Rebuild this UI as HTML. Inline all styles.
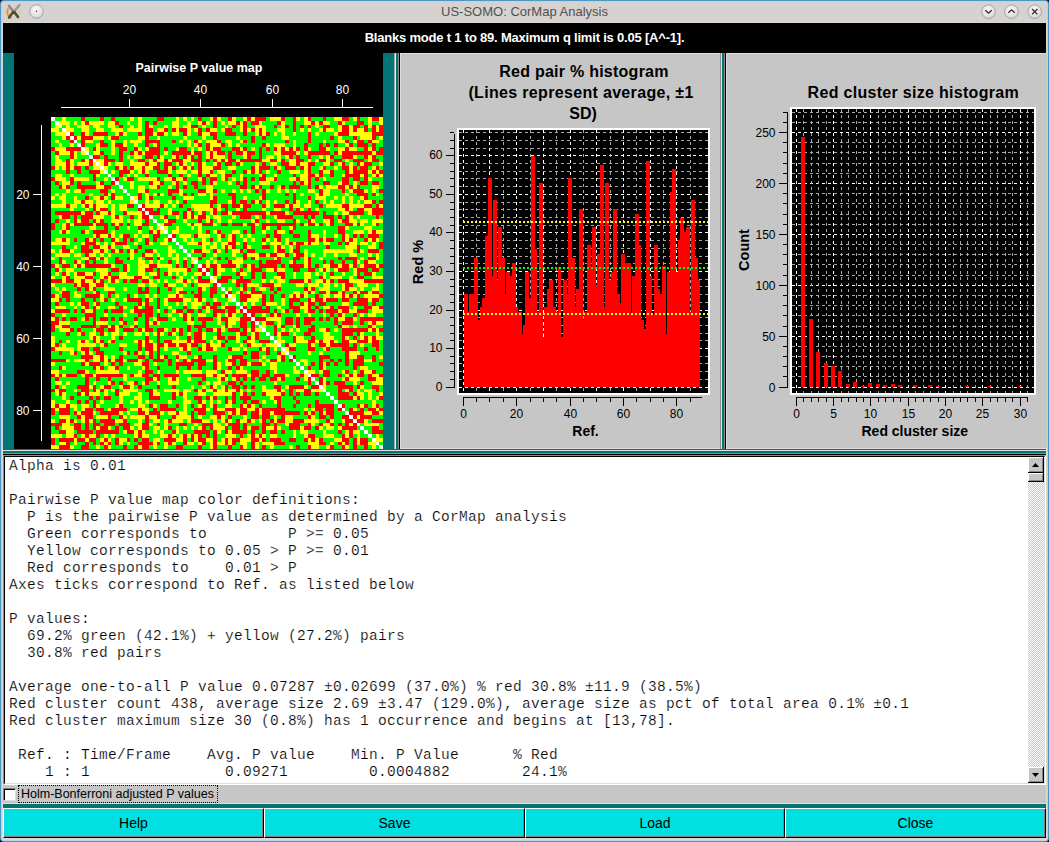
<!DOCTYPE html>
<html><head><meta charset="utf-8">
<style>
html,body{margin:0;padding:0;}
body{width:1049px;height:842px;overflow:hidden;background:#000;position:relative;font-family:"Liberation Sans",sans-serif;}
.a{position:absolute;}
svg text{font-family:"Liberation Sans",sans-serif;}
#txt{position:absolute;left:9px;top:458px;margin:0;font-family:"Liberation Mono",monospace;font-size:14.5px;letter-spacing:0.3px;line-height:17px;color:#000;-webkit-text-stroke:0.2px #fff;white-space:pre;}
.btn{position:absolute;top:808px;height:30px;background:#00e0e0;box-sizing:border-box;border-top:1px solid #fff;border-left:1px solid #fff;border-right:1px solid #000;border-bottom:1px solid #000;box-shadow:inset -1px -1px 0 #808080;font-size:14px;text-align:center;line-height:28px;color:#000;}
</style></head>
<body>
<!-- window frame -->
<div class="a" style="left:0;top:0;width:1049px;height:842px;background:#4a97c8;border-radius:4px;"></div>
<div class="a" style="left:1px;top:1px;width:1047px;height:840px;background:#b9d3e8;border-radius:3px;"></div>
<div class="a" style="left:2px;top:2px;width:1045px;height:838px;background:#dcd8d6;border-radius:2px;"></div>
<div class="a" style="left:2px;top:2px;width:1045px;height:20px;background:#d6d2d0;"></div>
<div class="a" style="left:0;top:22px;width:1049px;height:1px;"></div>
<!-- title bar -->
<div class="a" style="left:0;top:2px;width:1049px;height:20px;text-align:center;font-size:13px;line-height:20px;color:#505050;">US-SOMO: CorMap Analysis</div>
<svg class="a" style="left:0;top:0" width="60" height="22">
  <defs>
    <radialGradient id="bg1" cx="0.45" cy="0.35" r="0.7"><stop offset="0" stop-color="#fbfbfb"/><stop offset="0.7" stop-color="#e2e0de"/><stop offset="1" stop-color="#c8c6c4"/></radialGradient>
  </defs>
  <path d="M8.5 8.5 A6 6 0 0 0 12 18" stroke="#f08a18" stroke-width="1.6" fill="none"/>
  <path d="M19 8 A6 6 0 0 1 17 17" stroke="#f0c868" stroke-width="1" fill="none"/>
  <path d="M9 6 L18 17" stroke="#8a8a8a" stroke-width="2.6" stroke-linecap="round"/>
  <path d="M19.5 5 L9 17.5" stroke="#9a9a9a" stroke-width="2.4" stroke-linecap="round"/>
  <path d="M13 12 L9 17.5 M14.5 12 L18 17" stroke="#5a4a20" stroke-width="2.4" stroke-linecap="round"/>
  <circle cx="36.5" cy="11.5" r="6.8" fill="url(#bg1)" stroke="#9a9896" stroke-width="0.8"/>
  <circle cx="36.5" cy="11.2" r="0.8" fill="#333"/>
</svg>
<svg class="a" style="left:970px;top:0" width="79" height="22">
  <defs>
    <radialGradient id="bg2" cx="0.45" cy="0.35" r="0.7"><stop offset="0" stop-color="#fbfbfb"/><stop offset="0.7" stop-color="#e2e0de"/><stop offset="1" stop-color="#c8c6c4"/></radialGradient>
  </defs>
  <circle cx="18.5" cy="11.7" r="6.8" fill="url(#bg2)" stroke="#9a9896" stroke-width="0.8"/>
  <path d="M15.3 10.2 L18.5 13.2 L21.7 10.2" stroke="#2a2a2a" stroke-width="1.3" fill="none"/>
  <circle cx="41.5" cy="11.7" r="6.8" fill="url(#bg2)" stroke="#9a9896" stroke-width="0.8"/>
  <path d="M38.3 12.8 L41.5 9.8 L44.7 12.8" stroke="#2a2a2a" stroke-width="1.3" fill="none"/>
  <circle cx="64.7" cy="11.7" r="6.8" fill="url(#bg2)" stroke="#9a9896" stroke-width="0.8"/>
  <path d="M62 9 L67.4 14.4 M67.4 9 L62 14.4" stroke="#2a2a2a" stroke-width="1.3" fill="none"/>
</svg>

<!-- header -->
<div class="a" style="left:3px;top:23px;width:1043px;height:30px;background:#000;"></div>
<div class="a" style="left:3px;top:23px;width:1043px;height:30px;color:#fff;font-weight:bold;font-size:13px;letter-spacing:-0.2px;text-align:center;line-height:30px;">Blanks mode t 1 to 89. Maximum q limit is 0.05 [A^-1].</div>

<!-- panel 1 -->
<div class="a" style="left:3px;top:53px;width:391px;height:396px;background:#027474;"></div>
<div class="a" style="left:14px;top:53px;width:369px;height:396px;background:#000;"></div>
<!-- handle 1 -->
<div class="a" style="left:394px;top:53px;width:1px;height:396px;background:#a8a8a8;"></div>
<div class="a" style="left:395px;top:53px;width:1px;height:396px;background:#eeeeee;"></div>
<div class="a" style="left:396px;top:53px;width:2px;height:396px;background:#027474;"></div>
<div class="a" style="left:398px;top:53px;width:1px;height:396px;background:#8a8a8a;"></div>
<div class="a" style="left:399px;top:53px;width:1px;height:396px;background:#000;"></div>
<!-- panel 2 -->
<div class="a" style="left:400px;top:53px;width:320px;height:396px;background:#c6c6c6;box-sizing:border-box;border-left:1px solid #dedede;border-top:1px solid #dedede;border-bottom:1px solid #dedede;"></div>
<!-- handle 2 -->
<div class="a" style="left:720px;top:53px;width:1px;height:396px;background:#8a8a8a;"></div>
<div class="a" style="left:721px;top:53px;width:1px;height:396px;background:#e6e6e6;"></div>
<div class="a" style="left:722px;top:53px;width:2px;height:396px;background:#027474;"></div>
<div class="a" style="left:724px;top:53px;width:1px;height:396px;background:#8a8a8a;"></div>
<div class="a" style="left:725px;top:53px;width:1px;height:396px;background:#000;"></div>
<!-- panel 3 -->
<div class="a" style="left:726px;top:53px;width:321px;height:396px;background:#c6c6c6;box-sizing:border-box;border-left:1px solid #dedede;border-top:1px solid #dedede;border-bottom:1px solid #dedede;"></div>

<svg class="a" style="left:0;top:0;shape-rendering:crispEdges" width="1049" height="842">
<defs>
<clipPath id="c1"><rect x="459" y="130" width="249" height="263"/></clipPath>
<clipPath id="c3"><rect x="792" y="109" width="242" height="284"/></clipPath>
</defs>
<text x="199" y="72" font-size="12.5" text-anchor="middle" fill="#fff" font-weight="bold" >Pairwise P value map</text>
<rect x="61" y="107" width="312" height="1" fill="#fff"/>
<rect x="129" y="99" width="1" height="8" fill="#fff"/>
<text x="129.5" y="94" font-size="12" text-anchor="middle" fill="#fff" font-weight="normal" >20</text>
<rect x="200" y="99" width="1" height="8" fill="#fff"/>
<text x="200.5" y="94" font-size="12" text-anchor="middle" fill="#fff" font-weight="normal" >40</text>
<rect x="272" y="99" width="1" height="8" fill="#fff"/>
<text x="272.5" y="94" font-size="12" text-anchor="middle" fill="#fff" font-weight="normal" >60</text>
<rect x="342" y="99" width="1" height="8" fill="#fff"/>
<text x="342.5" y="94" font-size="12" text-anchor="middle" fill="#fff" font-weight="normal" >80</text>
<rect x="41" y="125" width="1" height="316" fill="#fff"/>
<rect x="33" y="194" width="8" height="1" fill="#fff"/>
<text x="29.5" y="198.5" font-size="12" text-anchor="end" fill="#fff" font-weight="normal" >20</text>
<rect x="33" y="266" width="8" height="1" fill="#fff"/>
<text x="29.5" y="270.5" font-size="12" text-anchor="end" fill="#fff" font-weight="normal" >40</text>
<rect x="33" y="338" width="8" height="1" fill="#fff"/>
<text x="29.5" y="342.5" font-size="12" text-anchor="end" fill="#fff" font-weight="normal" >60</text>
<rect x="33" y="410" width="8" height="1" fill="#fff"/>
<text x="29.5" y="414.5" font-size="12" text-anchor="end" fill="#fff" font-weight="normal" >80</text>
<path fill="#ff0000" d="M81 117h4v4h-4zM100 117h4v4h-4zM111 117h4v4h-4zM157 117h7v4h-7zM198 117h4v4h-4zM213 117h4v4h-4zM228 117h4v4h-4zM247 117h4v4h-4zM255 117h11v4h-11zM281 117h4v4h-4zM293 117h3v4h-3zM308 117h3v4h-3zM323 117h3v4h-3zM342 117h7v4h-7zM357 117h3v4h-3zM372 117h7v4h-7zM85 121h4v4h-4zM115 121h4v4h-4zM145 121h4v4h-4zM153 121h4v4h-4zM202 121h4v4h-4zM213 121h4v4h-4zM236 121h4v4h-4zM243 121h4v4h-4zM251 121h8v4h-8zM277 121h4v4h-4zM293 121h3v4h-3zM311 121h4v4h-4zM319 121h4v4h-4zM338 121h4v4h-4zM357 121h7v4h-7zM119 125h4v3h-4zM145 125h4v3h-4zM191 125h7v3h-7zM213 125h4v3h-4zM232 125h4v3h-4zM243 125h4v3h-4zM274 125h3v3h-3zM285 125h4v3h-4zM293 125h3v3h-3zM300 125h4v3h-4zM308 125h3v3h-3zM323 125h7v3h-7zM342 125h7v3h-7zM353 125h7v3h-7zM364 125h4v3h-4zM372 125h4v3h-4zM379 125h4v3h-4zM145 128h8v4h-8zM164 128h4v4h-4zM172 128h4v4h-4zM179 128h8v4h-8zM198 128h4v4h-4zM206 128h4v4h-4zM225 128h7v4h-7zM243 128h4v4h-4zM251 128h4v4h-4zM259 128h3v4h-3zM293 128h3v4h-3zM323 128h3v4h-3zM342 128h7v4h-7zM353 128h4v4h-4zM364 128h4v4h-4zM372 128h4v4h-4zM379 128h4v4h-4zM70 132h4v4h-4zM81 132h4v4h-4zM93 132h15v4h-15zM119 132h4v4h-4zM138 132h4v4h-4zM145 132h8v4h-8zM157 132h7v4h-7zM183 132h4v4h-4zM198 132h4v4h-4zM210 132h7v4h-7zM225 132h11v4h-11zM243 132h4v4h-4zM259 132h3v4h-3zM266 132h4v4h-4zM308 132h3v4h-3zM338 132h11v4h-11zM372 132h11v4h-11zM66 136h4v4h-4zM74 136h3v4h-3zM81 136h12v4h-12zM111 136h8v4h-8zM145 136h4v4h-4zM213 136h4v4h-4zM251 136h4v4h-4zM262 136h4v4h-4zM308 136h3v4h-3zM330 136h4v4h-4zM353 136h4v4h-4zM372 136h4v4h-4zM70 140h4v3h-4zM81 140h4v3h-4zM100 140h4v3h-4zM145 140h15v3h-15zM172 140h4v3h-4zM194 140h4v3h-4zM217 140h4v3h-4zM243 140h4v3h-4zM251 140h4v3h-4zM285 140h4v3h-4zM308 140h3v3h-3zM345 140h4v3h-4zM357 140h7v3h-7zM368 140h4v3h-4zM81 143h4v4h-4zM100 143h8v4h-8zM115 143h8v4h-8zM145 143h4v4h-4zM157 143h3v4h-3zM198 143h4v4h-4zM206 143h4v4h-4zM221 143h4v4h-4zM262 143h4v4h-4zM304 143h4v4h-4zM319 143h4v4h-4zM326 143h4v4h-4zM334 143h4v4h-4zM349 143h4v4h-4zM357 143h11v4h-11zM372 143h4v4h-4zM51 147h4v4h-4zM66 147h15v4h-15zM93 147h3v4h-3zM119 147h8v4h-8zM134 147h4v4h-4zM149 147h11v4h-11zM164 147h4v4h-4zM179 147h8v4h-8zM206 147h4v4h-4zM213 147h8v4h-8zM232 147h8v4h-8zM243 147h4v4h-4zM259 147h3v4h-3zM266 147h4v4h-4zM274 147h3v4h-3zM281 147h4v4h-4zM289 147h4v4h-4zM296 147h4v4h-4zM304 147h4v4h-4zM319 147h7v4h-7zM345 147h4v4h-4zM364 147h4v4h-4zM372 147h4v4h-4zM379 147h4v4h-4zM55 151h4v4h-4zM70 151h4v4h-4zM100 151h4v4h-4zM119 151h4v4h-4zM130 151h4v4h-4zM138 151h4v4h-4zM145 151h15v4h-15zM172 151h19v4h-19zM194 151h8v4h-8zM210 151h3v4h-3zM217 151h8v4h-8zM228 151h4v4h-4zM236 151h7v4h-7zM247 151h8v4h-8zM259 151h3v4h-3zM281 151h15v4h-15zM308 151h22v4h-22zM334 151h4v4h-4zM342 151h30v4h-30zM376 151h7v4h-7zM70 155h4v4h-4zM93 155h7v4h-7zM104 155h4v4h-4zM119 155h4v4h-4zM145 155h8v4h-8zM157 155h3v4h-3zM176 155h3v4h-3zM183 155h4v4h-4zM191 155h3v4h-3zM198 155h4v4h-4zM210 155h3v4h-3zM228 155h4v4h-4zM247 155h4v4h-4zM259 155h3v4h-3zM289 155h4v4h-4zM296 155h4v4h-4zM308 155h3v4h-3zM330 155h4v4h-4zM342 155h11v4h-11zM364 155h4v4h-4zM372 155h4v4h-4zM66 159h4v3h-4zM81 159h4v3h-4zM89 159h4v3h-4zM104 159h11v3h-11zM119 159h4v3h-4zM138 159h7v3h-7zM153 159h4v3h-4zM164 159h4v3h-4zM172 159h11v3h-11zM191 159h11v3h-11zM206 159h4v3h-4zM213 159h4v3h-4zM221 159h4v3h-4zM228 159h8v3h-8zM240 159h22v3h-22zM270 159h7v3h-7zM281 159h4v3h-4zM296 159h8v3h-8zM319 159h7v3h-7zM334 159h8v3h-8zM353 159h11v3h-11zM372 159h7v3h-7zM66 162h4v4h-4zM89 162h4v4h-4zM104 162h4v4h-4zM145 162h4v4h-4zM157 162h3v4h-3zM164 162h8v4h-8zM179 162h4v4h-4zM198 162h4v4h-4zM217 162h4v4h-4zM225 162h7v4h-7zM236 162h4v4h-4zM262 162h4v4h-4zM281 162h8v4h-8zM296 162h4v4h-4zM308 162h7v4h-7zM330 162h4v4h-4zM342 162h3v4h-3zM357 162h3v4h-3zM364 162h8v4h-8zM51 166h4v4h-4zM66 166h4v4h-4zM74 166h7v4h-7zM85 166h4v4h-4zM115 166h4v4h-4zM123 166h4v4h-4zM130 166h4v4h-4zM142 166h3v4h-3zM153 166h7v4h-7zM164 166h4v4h-4zM172 166h4v4h-4zM183 166h4v4h-4zM191 166h3v4h-3zM198 166h4v4h-4zM213 166h8v4h-8zM251 166h4v4h-4zM259 166h11v4h-11zM274 166h3v4h-3zM285 166h11v4h-11zM300 166h4v4h-4zM308 166h3v4h-3zM323 166h3v4h-3zM342 166h7v4h-7zM353 166h4v4h-4zM360 166h8v4h-8zM376 166h3v4h-3zM66 170h4v4h-4zM77 170h4v4h-4zM89 170h11v4h-11zM119 170h11v4h-11zM142 170h3v4h-3zM157 170h11v4h-11zM198 170h4v4h-4zM210 170h3v4h-3zM232 170h4v4h-4zM243 170h4v4h-4zM251 170h4v4h-4zM259 170h3v4h-3zM277 170h4v4h-4zM308 170h3v4h-3zM319 170h4v4h-4zM330 170h4v4h-4zM345 170h4v4h-4zM353 170h15v4h-15zM372 170h4v4h-4zM379 170h4v4h-4zM93 174h3v3h-3zM119 174h4v3h-4zM145 174h4v3h-4zM168 174h4v3h-4zM179 174h4v3h-4zM198 174h4v3h-4zM206 174h4v3h-4zM225 174h7v3h-7zM262 174h4v3h-4zM293 174h3v3h-3zM308 174h7v3h-7zM319 174h4v3h-4zM330 174h4v3h-4zM345 174h15v3h-15zM364 174h4v3h-4zM376 174h3v3h-3zM51 177h4v4h-4zM70 177h4v4h-4zM93 177h3v4h-3zM115 177h4v4h-4zM127 177h7v4h-7zM157 177h3v4h-3zM172 177h4v4h-4zM183 177h4v4h-4zM202 177h4v4h-4zM210 177h7v4h-7zM225 177h3v4h-3zM243 177h4v4h-4zM251 177h4v4h-4zM259 177h7v4h-7zM274 177h3v4h-3zM296 177h4v4h-4zM308 177h3v4h-3zM315 177h4v4h-4zM342 177h7v4h-7zM353 177h7v4h-7zM364 177h4v4h-4zM55 181h4v4h-4zM70 181h4v4h-4zM77 181h4v4h-4zM100 181h4v4h-4zM111 181h4v4h-4zM149 181h4v4h-4zM160 181h4v4h-4zM176 181h3v4h-3zM191 181h7v4h-7zM202 181h4v4h-4zM210 181h3v4h-3zM236 181h4v4h-4zM243 181h4v4h-4zM293 181h3v4h-3zM300 181h4v4h-4zM308 181h3v4h-3zM323 181h7v4h-7zM342 181h7v4h-7zM360 181h8v4h-8zM372 181h7v4h-7zM59 185h3v4h-3zM66 185h4v4h-4zM77 185h19v4h-19zM104 185h7v4h-7zM157 185h3v4h-3zM176 185h3v4h-3zM183 185h4v4h-4zM194 185h4v4h-4zM240 185h7v4h-7zM251 185h4v4h-4zM259 185h3v4h-3zM270 185h4v4h-4zM281 185h4v4h-4zM289 185h11v4h-11zM308 185h3v4h-3zM315 185h4v4h-4zM338 185h7v4h-7zM349 185h4v4h-4zM357 185h3v4h-3zM81 189h4v4h-4zM100 189h8v4h-8zM145 189h4v4h-4zM168 189h11v4h-11zM198 189h8v4h-8zM213 189h4v4h-4zM255 189h4v4h-4zM262 189h4v4h-4zM319 189h4v4h-4zM342 189h3v4h-3zM353 189h11v4h-11zM379 189h4v4h-4zM104 193h4v3h-4zM111 193h4v3h-4zM138 193h4v3h-4zM157 193h3v3h-3zM168 193h4v3h-4zM183 193h4v3h-4zM191 193h3v3h-3zM228 193h8v3h-8zM262 193h4v3h-4zM285 193h4v3h-4zM293 193h3v3h-3zM319 193h4v3h-4zM357 193h11v3h-11zM372 193h4v3h-4zM85 196h4v4h-4zM100 196h4v4h-4zM111 196h4v4h-4zM138 196h4v4h-4zM149 196h4v4h-4zM172 196h4v4h-4zM213 196h4v4h-4zM232 196h4v4h-4zM262 196h4v4h-4zM293 196h3v4h-3zM308 196h3v4h-3zM364 196h4v4h-4zM81 200h4v4h-4zM183 200h4v4h-4zM210 200h7v4h-7zM232 200h4v4h-4zM240 200h7v4h-7zM251 200h4v4h-4zM259 200h3v4h-3zM285 200h4v4h-4zM293 200h3v4h-3zM315 200h4v4h-4zM372 200h4v4h-4zM379 200h4v4h-4zM66 204h4v4h-4zM85 204h4v4h-4zM93 204h3v4h-3zM127 204h7v4h-7zM142 204h3v4h-3zM160 204h4v4h-4zM179 204h4v4h-4zM210 204h3v4h-3zM221 204h7v4h-7zM232 204h8v4h-8zM243 204h8v4h-8zM262 204h4v4h-4zM274 204h11v4h-11zM289 204h4v4h-4zM319 204h4v4h-4zM342 204h7v4h-7zM364 204h8v4h-8zM376 204h3v4h-3zM93 208h3v3h-3zM100 208h8v3h-8zM138 208h4v3h-4zM145 208h8v3h-8zM157 208h3v3h-3zM187 208h4v3h-4zM213 208h4v3h-4zM225 208h3v3h-3zM243 208h4v3h-4zM289 208h4v3h-4zM296 208h4v3h-4zM308 208h3v3h-3zM345 208h4v3h-4zM357 208h7v3h-7zM372 208h11v3h-11zM55 211h26v4h-26zM85 211h8v4h-8zM96 211h4v4h-4zM108 211h3v4h-3zM123 211h4v4h-4zM142 211h3v4h-3zM149 211h11v4h-11zM172 211h7v4h-7zM183 211h4v4h-4zM191 211h3v4h-3zM202 211h4v4h-4zM213 211h4v4h-4zM221 211h7v4h-7zM232 211h34v4h-34zM270 211h15v4h-15zM293 211h26v4h-26zM323 211h3v4h-3zM349 211h15v4h-15zM372 211h11v4h-11zM62 215h8v4h-8zM74 215h3v4h-3zM81 215h12v4h-12zM115 215h4v4h-4zM130 215h4v4h-4zM142 215h7v4h-7zM164 215h4v4h-4zM183 215h4v4h-4zM191 215h3v4h-3zM198 215h8v4h-8zM240 215h11v4h-11zM262 215h4v4h-4zM277 215h16v4h-16zM304 215h4v4h-4zM311 215h4v4h-4zM323 215h11v4h-11zM338 215h4v4h-4zM345 215h4v4h-4zM376 215h3v4h-3zM55 219h4v4h-4zM74 219h3v4h-3zM81 219h8v4h-8zM93 219h3v4h-3zM100 219h4v4h-4zM145 219h4v4h-4zM168 219h8v4h-8zM198 219h4v4h-4zM210 219h3v4h-3zM255 219h4v4h-4zM293 219h3v4h-3zM308 219h3v4h-3zM330 219h4v4h-4zM342 219h7v4h-7zM51 223h4v3h-4zM66 223h4v3h-4zM74 223h19v3h-19zM96 223h12v3h-12zM111 223h4v3h-4zM119 223h4v3h-4zM127 223h3v3h-3zM142 223h7v3h-7zM164 223h8v3h-8zM191 223h3v3h-3zM202 223h11v3h-11zM221 223h7v3h-7zM232 223h11v3h-11zM247 223h8v3h-8zM262 223h34v3h-34zM300 223h4v3h-4zM308 223h7v3h-7zM319 223h4v3h-4zM330 223h4v3h-4zM345 223h8v3h-8zM357 223h3v3h-3zM376 223h3v3h-3zM51 226h4v4h-4zM66 226h4v4h-4zM104 226h4v4h-4zM115 226h4v4h-4zM138 226h4v4h-4zM251 226h4v4h-4zM262 226h4v4h-4zM277 226h4v4h-4zM293 226h3v4h-3zM338 226h7v4h-7zM62 230h4v4h-4zM81 230h4v4h-4zM93 230h15v4h-15zM149 230h4v4h-4zM157 230h3v4h-3zM206 230h4v4h-4zM217 230h4v4h-4zM243 230h4v4h-4zM251 230h4v4h-4zM274 230h3v4h-3zM289 230h4v4h-4zM308 230h3v4h-3zM338 230h7v4h-7zM372 230h4v4h-4zM96 234h4v4h-4zM108 234h3v4h-3zM123 234h7v4h-7zM153 234h7v4h-7zM172 234h4v4h-4zM194 234h4v4h-4zM221 234h4v4h-4zM232 234h4v4h-4zM266 234h4v4h-4zM274 234h7v4h-7zM293 234h7v4h-7zM308 234h3v4h-3zM342 234h3v4h-3zM353 234h4v4h-4zM360 234h4v4h-4zM368 234h11v4h-11zM62 238h4v4h-4zM74 238h3v4h-3zM85 238h4v4h-4zM93 238h3v4h-3zM100 238h4v4h-4zM111 238h4v4h-4zM123 238h4v4h-4zM130 238h4v4h-4zM145 238h4v4h-4zM153 238h4v4h-4zM168 238h4v4h-4zM210 238h3v4h-3zM232 238h4v4h-4zM262 238h4v4h-4zM277 238h4v4h-4zM308 238h7v4h-7zM319 238h4v4h-4zM326 238h8v4h-8zM342 238h3v4h-3zM349 238h4v4h-4zM364 238h4v4h-4zM372 238h4v4h-4zM85 242h11v3h-11zM115 242h12v3h-12zM145 242h4v3h-4zM198 242h4v3h-4zM228 242h8v3h-8zM243 242h4v3h-4zM289 242h4v3h-4zM296 242h8v3h-8zM308 242h3v3h-3zM338 242h4v3h-4zM345 242h4v3h-4zM379 242h4v3h-4zM62 245h4v4h-4zM81 245h8v4h-8zM93 245h7v4h-7zM108 245h3v4h-3zM138 245h4v4h-4zM225 245h3v4h-3zM232 245h4v4h-4zM243 245h4v4h-4zM262 245h8v4h-8zM277 245h4v4h-4zM296 245h4v4h-4zM326 245h4v4h-4zM357 245h3v4h-3zM379 245h4v4h-4zM62 249h8v4h-8zM81 249h12v4h-12zM100 249h4v4h-4zM111 249h4v4h-4zM119 249h4v4h-4zM127 249h3v4h-3zM134 249h4v4h-4zM145 249h8v4h-8zM194 249h8v4h-8zM213 249h4v4h-4zM225 249h3v4h-3zM240 249h3v4h-3zM247 249h8v4h-8zM277 249h8v4h-8zM293 249h7v4h-7zM357 249h3v4h-3zM368 249h11v4h-11zM85 253h4v4h-4zM142 253h3v4h-3zM202 253h4v4h-4zM243 253h4v4h-4zM259 253h7v4h-7zM270 253h7v4h-7zM285 253h4v4h-4zM296 253h8v4h-8zM59 257h3v3h-3zM89 257h7v3h-7zM100 257h4v3h-4zM115 257h4v3h-4zM127 257h3v3h-3zM145 257h8v3h-8zM157 257h3v3h-3zM198 257h4v3h-4zM217 257h4v3h-4zM225 257h3v3h-3zM243 257h4v3h-4zM251 257h4v3h-4zM277 257h4v3h-4zM293 257h7v3h-7zM308 257h3v3h-3zM338 257h4v3h-4zM345 257h12v3h-12zM368 257h8v3h-8zM59 260h3v4h-3zM74 260h3v4h-3zM85 260h4v4h-4zM93 260h3v4h-3zM115 260h8v4h-8zM168 260h4v4h-4zM183 260h4v4h-4zM228 260h4v4h-4zM259 260h3v4h-3zM266 260h15v4h-15zM293 260h3v4h-3zM308 260h3v4h-3zM323 260h3v4h-3zM330 260h4v4h-4zM342 260h3v4h-3zM353 260h4v4h-4zM364 260h4v4h-4zM51 264h4v4h-4zM62 264h8v4h-8zM77 264h4v4h-4zM85 264h26v4h-26zM123 264h4v4h-4zM149 264h8v4h-8zM176 264h3v4h-3zM183 264h4v4h-4zM191 264h3v4h-3zM202 264h4v4h-4zM210 264h7v4h-7zM221 264h15v4h-15zM243 264h4v4h-4zM251 264h4v4h-4zM259 264h18v4h-18zM281 264h4v4h-4zM289 264h15v4h-15zM308 264h3v4h-3zM315 264h4v4h-4zM330 264h8v4h-8zM342 264h7v4h-7zM353 264h4v4h-4zM364 264h12v4h-12zM379 264h4v4h-4zM55 268h4v4h-4zM111 268h8v4h-8zM123 268h4v4h-4zM145 268h8v4h-8zM157 268h3v4h-3zM187 268h4v4h-4zM198 268h4v4h-4zM206 268h4v4h-4zM213 268h4v4h-4zM240 268h3v4h-3zM251 268h11v4h-11zM274 268h3v4h-3zM293 268h7v4h-7zM308 268h7v4h-7zM323 268h3v4h-3zM338 268h11v4h-11zM357 268h11v4h-11zM372 268h7v4h-7zM62 272h4v4h-4zM77 272h8v4h-8zM93 272h3v4h-3zM108 272h3v4h-3zM157 272h3v4h-3zM164 272h4v4h-4zM202 272h4v4h-4zM213 272h4v4h-4zM236 272h4v4h-4zM251 272h4v4h-4zM262 272h4v4h-4zM277 272h8v4h-8zM330 272h4v4h-4zM357 272h3v4h-3zM364 272h8v4h-8zM66 276h4v3h-4zM85 276h8v3h-8zM104 276h4v3h-4zM111 276h8v3h-8zM134 276h8v3h-8zM153 276h7v3h-7zM172 276h4v3h-4zM198 276h4v3h-4zM221 276h11v3h-11zM240 276h3v3h-3zM251 276h4v3h-4zM262 276h4v3h-4zM281 276h4v3h-4zM319 276h4v3h-4zM357 276h7v3h-7zM51 279h11v4h-11zM66 279h8v4h-8zM81 279h4v4h-4zM93 279h3v4h-3zM100 279h4v4h-4zM111 279h4v4h-4zM123 279h4v4h-4zM130 279h8v4h-8zM142 279h7v4h-7zM183 279h4v4h-4zM198 279h12v4h-12zM217 279h11v4h-11zM236 279h15v4h-15zM289 279h15v4h-15zM308 279h3v4h-3zM323 279h3v4h-3zM330 279h4v4h-4zM338 279h11v4h-11zM364 279h19v4h-19zM74 283h3v4h-3zM81 283h8v4h-8zM96 283h8v4h-8zM164 283h4v4h-4zM191 283h3v4h-3zM213 283h4v4h-4zM236 283h4v4h-4zM243 283h4v4h-4zM262 283h12v4h-12zM345 283h8v4h-8zM77 287h4v4h-4zM85 287h4v4h-4zM93 287h3v4h-3zM138 287h4v4h-4zM145 287h4v4h-4zM157 287h3v4h-3zM168 287h4v4h-4zM198 287h4v4h-4zM210 287h7v4h-7zM243 287h4v4h-4zM251 287h4v4h-4zM270 287h4v4h-4zM277 287h4v4h-4zM304 287h4v4h-4zM311 287h4v4h-4zM345 287h4v4h-4zM62 291h8v3h-8zM96 291h4v3h-4zM108 291h7v3h-7zM138 291h11v3h-11zM157 291h3v3h-3zM179 291h8v3h-8zM191 291h3v3h-3zM198 291h4v3h-4zM210 291h7v3h-7zM228 291h4v3h-4zM240 291h3v3h-3zM251 291h11v3h-11zM274 291h3v3h-3zM308 291h3v3h-3zM319 291h7v3h-7zM330 291h8v3h-8zM342 291h3v3h-3zM353 291h4v3h-4zM360 291h8v3h-8zM372 291h7v3h-7zM51 294h4v4h-4zM62 294h8v4h-8zM85 294h15v4h-15zM108 294h3v4h-3zM127 294h3v4h-3zM176 294h3v4h-3zM194 294h8v4h-8zM210 294h3v4h-3zM225 294h3v4h-3zM240 294h11v4h-11zM262 294h4v4h-4zM270 294h4v4h-4zM281 294h4v4h-4zM293 294h3v4h-3zM300 294h4v4h-4zM315 294h4v4h-4zM342 294h3v4h-3zM349 294h4v4h-4zM357 294h3v4h-3zM379 294h4v4h-4zM59 298h3v4h-3zM66 298h4v4h-4zM81 298h4v4h-4zM93 298h3v4h-3zM104 298h4v4h-4zM127 298h15v4h-15zM145 298h4v4h-4zM157 298h3v4h-3zM168 298h15v4h-15zM198 298h4v4h-4zM240 298h7v4h-7zM262 298h4v4h-4zM270 298h4v4h-4zM289 298h11v4h-11zM308 298h3v4h-3zM315 298h8v4h-8zM326 298h12v4h-12zM342 298h7v4h-7zM357 298h11v4h-11zM372 298h7v4h-7zM55 302h4v4h-4zM81 302h8v4h-8zM96 302h4v4h-4zM115 302h4v4h-4zM138 302h4v4h-4zM145 302h4v4h-4zM157 302h3v4h-3zM206 302h4v4h-4zM213 302h8v4h-8zM262 302h4v4h-4zM289 302h4v4h-4zM300 302h4v4h-4zM308 302h7v4h-7zM319 302h7v4h-7zM353 302h15v4h-15zM372 302h4v4h-4zM85 306h4v3h-4zM93 306h3v3h-3zM119 306h4v3h-4zM134 306h4v3h-4zM145 306h8v3h-8zM157 306h3v3h-3zM183 306h4v3h-4zM202 306h4v3h-4zM210 306h7v3h-7zM225 306h11v3h-11zM243 306h4v3h-4zM251 306h11v3h-11zM266 306h4v3h-4zM289 306h11v3h-11zM308 306h3v3h-3zM315 306h4v3h-4zM330 306h4v3h-4zM338 306h11v3h-11zM364 306h8v3h-8zM379 306h4v3h-4zM55 309h15v4h-15zM74 309h3v4h-3zM81 309h4v4h-4zM93 309h3v4h-3zM104 309h4v4h-4zM111 309h12v4h-12zM134 309h19v4h-19zM164 309h4v4h-4zM176 309h7v4h-7zM187 309h7v4h-7zM198 309h4v4h-4zM213 309h12v4h-12zM228 309h8v4h-8zM240 309h3v4h-3zM247 309h23v4h-23zM274 309h3v4h-3zM285 309h4v4h-4zM293 309h7v4h-7zM308 309h7v4h-7zM319 309h4v4h-4zM326 309h12v4h-12zM342 309h7v4h-7zM357 309h11v4h-11zM51 313h4v4h-4zM85 313h11v4h-11zM138 313h4v4h-4zM145 313h8v4h-8zM157 313h3v4h-3zM183 313h4v4h-4zM213 313h4v4h-4zM228 313h4v4h-4zM243 313h4v4h-4zM251 313h4v4h-4zM270 313h4v4h-4zM277 313h4v4h-4zM330 313h4v4h-4zM338 313h4v4h-4zM353 313h4v4h-4zM55 317h4v4h-4zM62 317h4v4h-4zM70 317h7v4h-7zM85 317h4v4h-4zM93 317h3v4h-3zM100 317h8v4h-8zM111 317h4v4h-4zM119 317h4v4h-4zM134 317h4v4h-4zM145 317h4v4h-4zM157 317h11v4h-11zM183 317h4v4h-4zM191 317h3v4h-3zM198 317h15v4h-15zM221 317h7v4h-7zM240 317h11v4h-11zM255 317h11v4h-11zM285 317h8v4h-8zM296 317h4v4h-4zM304 317h11v4h-11zM319 317h4v4h-4zM326 317h4v4h-4zM334 317h4v4h-4zM345 317h8v4h-8zM360 317h23v4h-23zM51 321h8v4h-8zM93 321h3v4h-3zM123 321h4v4h-4zM145 321h4v4h-4zM153 321h4v4h-4zM202 321h4v4h-4zM225 321h3v4h-3zM240 321h7v4h-7zM251 321h4v4h-4zM266 321h8v4h-8zM285 321h8v4h-8zM296 321h4v4h-4zM304 321h7v4h-7zM334 321h4v4h-4zM342 321h11v4h-11zM360 321h4v4h-4zM372 321h4v4h-4zM51 325h4v3h-4zM62 325h8v3h-8zM81 325h15v3h-15zM100 325h8v3h-8zM111 325h4v3h-4zM119 325h4v3h-4zM134 325h4v3h-4zM145 325h4v3h-4zM187 325h4v3h-4zM194 325h12v3h-12zM225 325h3v3h-3zM240 325h7v3h-7zM251 325h4v3h-4zM274 325h3v3h-3zM281 325h4v3h-4zM296 325h4v3h-4zM311 325h4v3h-4zM338 325h4v3h-4zM368 325h4v3h-4zM51 328h4v4h-4zM70 328h4v4h-4zM77 328h4v4h-4zM96 328h8v4h-8zM108 328h7v4h-7zM123 328h11v4h-11zM138 328h4v4h-4zM145 328h8v4h-8zM157 328h7v4h-7zM172 328h4v4h-4zM179 328h4v4h-4zM187 328h4v4h-4zM198 328h4v4h-4zM206 328h7v4h-7zM217 328h4v4h-4zM228 328h12v4h-12zM243 328h4v4h-4zM251 328h4v4h-4zM274 328h3v4h-3zM308 328h7v4h-7zM326 328h4v4h-4zM342 328h26v4h-26zM372 328h4v4h-4zM379 328h4v4h-4zM66 332h4v4h-4zM81 332h4v4h-4zM100 332h4v4h-4zM157 332h3v4h-3zM168 332h4v4h-4zM179 332h4v4h-4zM194 332h8v4h-8zM217 332h4v4h-4zM240 332h7v4h-7zM255 332h4v4h-4zM274 332h3v4h-3zM281 332h8v4h-8zM304 332h7v4h-7zM342 332h11v4h-11zM357 332h3v4h-3zM93 336h3v4h-3zM119 336h4v4h-4zM145 336h4v4h-4zM157 336h3v4h-3zM187 336h4v4h-4zM194 336h8v4h-8zM217 336h8v4h-8zM228 336h8v4h-8zM247 336h4v4h-4zM255 336h4v4h-4zM293 336h3v4h-3zM311 336h4v4h-4zM342 336h3v4h-3zM353 336h4v4h-4zM364 336h4v4h-4zM372 336h4v4h-4zM59 340h3v3h-3zM81 340h4v3h-4zM93 340h3v3h-3zM100 340h4v3h-4zM111 340h4v3h-4zM138 340h4v3h-4zM145 340h4v3h-4zM157 340h3v3h-3zM164 340h8v3h-8zM187 340h4v3h-4zM194 340h12v3h-12zM225 340h3v3h-3zM243 340h4v3h-4zM259 340h11v3h-11zM293 340h3v3h-3zM308 340h7v3h-7zM319 340h4v3h-4zM330 340h4v3h-4zM342 340h7v3h-7zM357 340h11v3h-11zM372 340h7v3h-7zM55 343h4v4h-4zM104 343h4v4h-4zM138 343h4v4h-4zM145 343h8v4h-8zM157 343h7v4h-7zM168 343h8v4h-8zM179 343h8v4h-8zM191 343h7v4h-7zM206 343h4v4h-4zM221 343h4v4h-4zM247 343h4v4h-4zM285 343h4v4h-4zM308 343h3v4h-3zM319 343h7v4h-7zM330 343h19v4h-19zM353 343h4v4h-4zM372 343h7v4h-7zM51 347h4v4h-4zM81 347h8v4h-8zM93 347h7v4h-7zM119 347h4v4h-4zM138 347h4v4h-4zM145 347h8v4h-8zM157 347h3v4h-3zM183 347h4v4h-4zM198 347h4v4h-4zM206 347h7v4h-7zM228 347h4v4h-4zM259 347h3v4h-3zM266 347h4v4h-4zM289 347h7v4h-7zM308 347h7v4h-7zM326 347h4v4h-4zM342 347h15v4h-15zM364 347h4v4h-4zM376 347h3v4h-3zM59 351h3v4h-3zM74 351h3v4h-3zM85 351h4v4h-4zM96 351h8v4h-8zM127 351h3v4h-3zM134 351h4v4h-4zM149 351h4v4h-4zM157 351h3v4h-3zM187 351h4v4h-4zM243 351h4v4h-4zM251 351h8v4h-8zM266 351h4v4h-4zM277 351h4v4h-4zM345 351h4v4h-4zM81 355h12v4h-12zM100 355h4v4h-4zM119 355h4v4h-4zM138 355h7v4h-7zM149 355h4v4h-4zM157 355h3v4h-3zM164 355h4v4h-4zM176 355h3v4h-3zM198 355h4v4h-4zM213 355h4v4h-4zM232 355h11v4h-11zM251 355h8v4h-8zM281 355h4v4h-4zM293 355h3v4h-3zM319 355h11v4h-11zM345 355h4v4h-4zM357 355h7v4h-7zM372 355h4v4h-4zM51 359h15v3h-15zM85 359h4v3h-4zM100 359h4v3h-4zM108 359h3v3h-3zM115 359h8v3h-8zM127 359h11v3h-11zM145 359h4v3h-4zM153 359h11v3h-11zM168 359h4v3h-4zM183 359h4v3h-4zM191 359h15v3h-15zM213 359h4v3h-4zM228 359h8v3h-8zM240 359h7v3h-7zM270 359h7v3h-7zM281 359h4v3h-4zM289 359h4v3h-4zM319 359h4v3h-4zM330 359h4v3h-4zM338 359h4v3h-4zM345 359h4v3h-4zM353 359h11v3h-11zM372 359h4v3h-4zM81 362h4v4h-4zM89 362h11v4h-11zM111 362h4v4h-4zM119 362h4v4h-4zM142 362h7v4h-7zM168 362h4v4h-4zM176 362h18v4h-18zM198 362h8v4h-8zM213 362h4v4h-4zM232 362h4v4h-4zM240 362h7v4h-7zM251 362h11v4h-11zM311 362h4v4h-4zM319 362h4v4h-4zM326 362h4v4h-4zM334 362h4v4h-4zM345 362h4v4h-4zM353 362h11v4h-11zM379 362h4v4h-4zM59 366h3v4h-3zM93 366h3v4h-3zM100 366h4v4h-4zM115 366h4v4h-4zM145 366h4v4h-4zM157 366h3v4h-3zM176 366h3v4h-3zM187 366h4v4h-4zM198 366h4v4h-4zM213 366h4v4h-4zM228 366h4v4h-4zM236 366h4v4h-4zM308 366h3v4h-3zM319 366h4v4h-4zM353 366h4v4h-4zM77 370h8v4h-8zM145 370h8v4h-8zM221 370h4v4h-4zM251 370h8v4h-8zM266 370h4v4h-4zM323 370h7v4h-7zM345 370h4v4h-4zM360 370h4v4h-4zM372 370h4v4h-4zM51 374h4v3h-4zM59 374h3v3h-3zM66 374h11v3h-11zM85 374h8v3h-8zM96 374h27v3h-27zM130 374h4v3h-4zM142 374h7v3h-7zM153 374h7v3h-7zM164 374h15v3h-15zM191 374h15v3h-15zM213 374h4v3h-4zM225 374h3v3h-3zM232 374h15v3h-15zM251 374h8v3h-8zM262 374h8v3h-8zM274 374h11v3h-11zM300 374h4v3h-4zM311 374h8v3h-8zM323 374h7v3h-7zM338 374h4v3h-4zM349 374h4v3h-4zM357 374h7v3h-7zM368 374h4v3h-4zM379 374h4v3h-4zM55 377h4v4h-4zM85 377h4v4h-4zM96 377h4v4h-4zM108 377h3v4h-3zM145 377h8v4h-8zM157 377h3v4h-3zM172 377h4v4h-4zM202 377h4v4h-4zM221 377h4v4h-4zM236 377h4v4h-4zM243 377h4v4h-4zM251 377h4v4h-4zM259 377h7v4h-7zM270 377h7v4h-7zM281 377h4v4h-4zM296 377h4v4h-4zM308 377h3v4h-3zM319 377h4v4h-4zM345 377h4v4h-4zM368 377h8v4h-8zM85 381h4v4h-4zM111 381h4v4h-4zM119 381h4v4h-4zM134 381h4v4h-4zM145 381h4v4h-4zM198 381h4v4h-4zM228 381h8v4h-8zM240 381h3v4h-3zM308 381h3v4h-3zM319 381h4v4h-4zM326 381h4v4h-4zM334 381h11v4h-11zM360 381h4v4h-4zM55 385h4v4h-4zM77 385h12v4h-12zM93 385h3v4h-3zM104 385h7v4h-7zM123 385h7v4h-7zM138 385h4v4h-4zM157 385h3v4h-3zM172 385h4v4h-4zM210 385h3v4h-3zM225 385h3v4h-3zM232 385h8v4h-8zM243 385h4v4h-4zM251 385h4v4h-4zM274 385h7v4h-7zM289 385h15v4h-15zM311 385h8v4h-8zM338 385h15v4h-15zM357 385h3v4h-3zM372 385h7v4h-7zM51 389h4v3h-4zM59 389h7v3h-7zM81 389h8v3h-8zM93 389h3v3h-3zM100 389h4v3h-4zM115 389h4v3h-4zM145 389h8v3h-8zM194 389h4v3h-4zM202 389h4v3h-4zM213 389h4v3h-4zM225 389h3v3h-3zM236 389h4v3h-4zM277 389h4v3h-4zM289 389h4v3h-4zM304 389h7v3h-7zM338 389h4v3h-4zM349 389h4v3h-4zM376 389h3v3h-3zM59 392h3v4h-3zM77 392h4v4h-4zM85 392h4v4h-4zM115 392h4v4h-4zM149 392h4v4h-4zM172 392h4v4h-4zM179 392h4v4h-4zM232 392h4v4h-4zM243 392h4v4h-4zM251 392h4v4h-4zM262 392h4v4h-4zM281 392h4v4h-4zM289 392h4v4h-4zM296 392h4v4h-4zM304 392h7v4h-7zM315 392h4v4h-4zM338 392h11v4h-11zM353 392h4v4h-4zM70 396h4v4h-4zM89 396h4v4h-4zM96 396h4v4h-4zM104 396h7v4h-7zM149 396h11v4h-11zM172 396h4v4h-4zM194 396h8v4h-8zM206 396h4v4h-4zM213 396h4v4h-4zM225 396h3v4h-3zM232 396h4v4h-4zM240 396h11v4h-11zM274 396h7v4h-7zM293 396h3v4h-3zM338 396h15v4h-15zM357 396h3v4h-3zM379 396h4v4h-4zM77 400h4v4h-4zM85 400h4v4h-4zM93 400h3v4h-3zM198 400h4v4h-4zM225 400h3v4h-3zM232 400h4v4h-4zM243 400h4v4h-4zM251 400h8v4h-8zM277 400h4v4h-4zM296 400h4v4h-4zM315 400h4v4h-4zM55 404h4v4h-4zM66 404h4v4h-4zM93 404h3v4h-3zM119 404h4v4h-4zM149 404h4v4h-4zM160 404h8v4h-8zM176 404h3v4h-3zM191 404h3v4h-3zM202 404h4v4h-4zM213 404h4v4h-4zM240 404h3v4h-3zM247 404h4v4h-4zM259 404h3v4h-3zM277 404h4v4h-4zM293 404h3v4h-3zM308 404h3v4h-3zM315 404h19v4h-19zM342 404h3v4h-3zM357 404h3v4h-3zM364 404h4v4h-4zM376 404h3v4h-3zM51 408h4v3h-4zM59 408h11v3h-11zM85 408h8v3h-8zM96 408h8v3h-8zM111 408h16v3h-16zM138 408h4v3h-4zM153 408h4v3h-4zM160 408h16v3h-16zM194 408h12v3h-12zM213 408h4v3h-4zM225 408h11v3h-11zM240 408h7v3h-7zM255 408h4v3h-4zM262 408h23v3h-23zM315 408h8v3h-8zM326 408h8v3h-8zM338 408h4v3h-4zM349 408h4v3h-4zM360 408h4v3h-4zM368 408h8v3h-8zM379 408h4v3h-4zM51 411h4v4h-4zM59 411h11v4h-11zM74 411h3v4h-3zM81 411h12v4h-12zM100 411h19v4h-19zM138 411h7v4h-7zM149 411h11v4h-11zM176 411h3v4h-3zM191 411h3v4h-3zM198 411h8v4h-8zM213 411h12v4h-12zM232 411h4v4h-4zM240 411h7v4h-7zM251 411h8v4h-8zM262 411h8v4h-8zM274 411h26v4h-26zM304 411h4v4h-4zM311 411h4v4h-4zM319 411h4v4h-4zM326 411h8v4h-8zM349 411h15v4h-15zM372 411h7v4h-7zM77 415h4v4h-4zM85 415h8v4h-8zM108 415h3v4h-3zM119 415h4v4h-4zM145 415h4v4h-4zM157 415h3v4h-3zM172 415h4v4h-4zM191 415h3v4h-3zM217 415h4v4h-4zM228 415h4v4h-4zM251 415h8v4h-8zM262 415h8v4h-8zM281 415h4v4h-4zM308 415h3v4h-3zM319 415h7v4h-7zM330 415h4v4h-4zM342 415h7v4h-7zM353 415h4v4h-4zM360 415h12v4h-12zM59 419h7v4h-7zM70 419h4v4h-4zM85 419h4v4h-4zM93 419h3v4h-3zM100 419h15v4h-15zM123 419h4v4h-4zM145 419h4v4h-4zM168 419h4v4h-4zM191 419h11v4h-11zM225 419h3v4h-3zM236 419h4v4h-4zM247 419h4v4h-4zM262 419h4v4h-4zM270 419h4v4h-4zM277 419h8v4h-8zM293 419h11v4h-11zM326 419h4v4h-4zM345 419h8v4h-8zM357 419h7v4h-7zM372 419h11v4h-11zM51 423h11v3h-11zM74 423h7v3h-7zM85 423h4v3h-4zM93 423h7v3h-7zM104 423h11v3h-11zM119 423h11v3h-11zM142 423h7v3h-7zM157 423h3v3h-3zM179 423h8v3h-8zM202 423h11v3h-11zM228 423h12v3h-12zM243 423h4v3h-4zM262 423h8v3h-8zM274 423h3v3h-3zM289 423h11v3h-11zM308 423h3v3h-3zM319 423h4v3h-4zM330 423h4v3h-4zM338 423h4v3h-4zM345 423h4v3h-4zM353 423h4v3h-4zM55 426h4v4h-4zM74 426h7v4h-7zM85 426h4v4h-4zM93 426h3v4h-3zM100 426h8v4h-8zM115 426h4v4h-4zM123 426h7v4h-7zM142 426h7v4h-7zM168 426h4v4h-4zM202 426h4v4h-4zM210 426h3v4h-3zM225 426h3v4h-3zM232 426h8v4h-8zM243 426h4v4h-4zM251 426h8v4h-8zM262 426h4v4h-4zM274 426h3v4h-3zM289 426h11v4h-11zM304 426h7v4h-7zM315 426h4v4h-4zM342 426h15v4h-15zM372 426h7v4h-7zM59 430h7v4h-7zM77 430h16v4h-16zM96 430h23v4h-23zM127 430h7v4h-7zM138 430h4v4h-4zM172 430h4v4h-4zM194 430h16v4h-16zM213 430h4v4h-4zM225 430h3v4h-3zM232 430h15v4h-15zM251 430h4v4h-4zM262 430h4v4h-4zM270 430h7v4h-7zM281 430h4v4h-4zM338 430h4v4h-4zM349 430h4v4h-4zM372 430h11v4h-11zM74 434h3v4h-3zM85 434h4v4h-4zM96 434h4v4h-4zM138 434h4v4h-4zM168 434h4v4h-4zM183 434h4v4h-4zM191 434h3v4h-3zM198 434h4v4h-4zM206 434h4v4h-4zM213 434h4v4h-4zM240 434h3v4h-3zM251 434h4v4h-4zM259 434h3v4h-3zM308 434h7v4h-7zM342 434h3v4h-3zM349 434h4v4h-4zM51 438h4v4h-4zM59 438h15v4h-15zM77 438h8v4h-8zM89 438h7v4h-7zM104 438h4v4h-4zM115 438h4v4h-4zM127 438h3v4h-3zM134 438h4v4h-4zM142 438h7v4h-7zM164 438h12v4h-12zM183 438h4v4h-4zM191 438h3v4h-3zM198 438h8v4h-8zM213 438h4v4h-4zM225 438h3v4h-3zM232 438h8v4h-8zM251 438h8v4h-8zM262 438h4v4h-4zM270 438h11v4h-11zM289 438h7v4h-7zM304 438h4v4h-4zM311 438h4v4h-4zM319 438h4v4h-4zM342 438h7v4h-7zM353 438h4v4h-4zM360 438h8v4h-8zM51 442h4v3h-4zM66 442h4v3h-4zM85 442h4v3h-4zM93 442h3v3h-3zM100 442h4v3h-4zM108 442h3v3h-3zM115 442h4v3h-4zM138 442h15v3h-15zM157 442h3v3h-3zM168 442h4v3h-4zM183 442h4v3h-4zM202 442h4v3h-4zM213 442h4v3h-4zM225 442h3v3h-3zM232 442h4v3h-4zM251 442h4v3h-4zM274 442h11v3h-11zM319 442h7v3h-7zM338 442h4v3h-4zM345 442h4v3h-4zM353 442h4v3h-4zM360 442h8v3h-8zM59 445h11v4h-11zM81 445h8v4h-8zM104 445h4v4h-4zM123 445h4v4h-4zM134 445h4v4h-4zM142 445h7v4h-7zM176 445h7v4h-7zM198 445h4v4h-4zM213 445h4v4h-4zM228 445h4v4h-4zM240 445h3v4h-3zM251 445h4v4h-4zM262 445h4v4h-4zM296 445h4v4h-4zM308 445h3v4h-3zM330 445h4v4h-4zM342 445h3v4h-3zM353 445h4v4h-4zM364 445h4v4h-4z"/><path fill="#00ff00" d="M55 117h7v4h-7zM66 117h15v4h-15zM85 117h15v4h-15zM104 117h7v4h-7zM115 117h15v4h-15zM134 117h4v4h-4zM142 117h15v4h-15zM164 117h12v4h-12zM179 117h4v4h-4zM187 117h4v4h-4zM194 117h4v4h-4zM202 117h8v4h-8zM221 117h7v4h-7zM236 117h7v4h-7zM266 117h4v4h-4zM285 117h8v4h-8zM300 117h4v4h-4zM311 117h12v4h-12zM326 117h8v4h-8zM349 117h4v4h-4zM360 117h8v4h-8zM51 121h4v4h-4zM70 121h4v4h-4zM77 121h4v4h-4zM104 121h4v4h-4zM119 121h8v4h-8zM130 121h8v4h-8zM142 121h3v4h-3zM149 121h4v4h-4zM157 121h15v4h-15zM179 121h8v4h-8zM191 121h7v4h-7zM210 121h3v4h-3zM217 121h4v4h-4zM225 121h3v4h-3zM247 121h4v4h-4zM262 121h15v4h-15zM285 121h8v4h-8zM296 121h8v4h-8zM330 121h8v4h-8zM345 121h12v4h-12zM364 121h4v4h-4zM372 121h7v4h-7zM51 125h4v3h-4zM62 125h4v3h-4zM70 125h7v3h-7zM89 125h4v3h-4zM100 125h8v3h-8zM115 125h4v3h-4zM123 125h7v3h-7zM134 125h4v3h-4zM142 125h3v3h-3zM153 125h11v3h-11zM168 125h4v3h-4zM179 125h4v3h-4zM198 125h4v3h-4zM206 125h7v3h-7zM217 125h8v3h-8zM228 125h4v3h-4zM236 125h4v3h-4zM247 125h8v3h-8zM266 125h8v3h-8zM277 125h4v3h-4zM289 125h4v3h-4zM296 125h4v3h-4zM304 125h4v3h-4zM311 125h4v3h-4zM319 125h4v3h-4zM330 125h8v3h-8zM360 125h4v3h-4zM59 128h3v4h-3zM74 128h7v4h-7zM89 128h7v4h-7zM104 128h7v4h-7zM123 128h4v4h-4zM142 128h3v4h-3zM153 128h4v4h-4zM168 128h4v4h-4zM191 128h3v4h-3zM202 128h4v4h-4zM217 128h4v4h-4zM232 128h8v4h-8zM266 128h11v4h-11zM285 128h8v4h-8zM296 128h4v4h-4zM304 128h4v4h-4zM311 128h8v4h-8zM334 128h4v4h-4zM368 128h4v4h-4zM51 132h4v4h-4zM74 132h7v4h-7zM89 132h4v4h-4zM108 132h7v4h-7zM127 132h11v4h-11zM142 132h3v4h-3zM168 132h4v4h-4zM179 132h4v4h-4zM191 132h7v4h-7zM217 132h8v4h-8zM236 132h7v4h-7zM247 132h8v4h-8zM270 132h4v4h-4zM277 132h4v4h-4zM285 132h8v4h-8zM296 132h12v4h-12zM311 132h4v4h-4zM319 132h15v4h-15zM51 136h11v4h-11zM104 136h4v4h-4zM119 136h19v4h-19zM149 136h8v4h-8zM160 136h23v4h-23zM187 136h15v4h-15zM206 136h7v4h-7zM217 136h19v4h-19zM240 136h11v4h-11zM255 136h7v4h-7zM266 136h15v4h-15zM289 136h19v4h-19zM311 136h19v4h-19zM334 136h4v4h-4zM342 136h11v4h-11zM357 136h3v4h-3zM376 136h3v4h-3zM51 140h4v3h-4zM59 140h11v3h-11zM77 140h4v3h-4zM93 140h7v3h-7zM104 140h7v3h-7zM115 140h8v3h-8zM127 140h3v3h-3zM142 140h3v3h-3zM160 140h12v3h-12zM176 140h3v3h-3zM183 140h4v3h-4zM191 140h3v3h-3zM202 140h4v3h-4zM221 140h4v3h-4zM232 140h8v3h-8zM247 140h4v3h-4zM255 140h30v3h-30zM289 140h4v3h-4zM296 140h12v3h-12zM311 140h12v3h-12zM326 140h12v3h-12zM349 140h4v3h-4zM364 140h4v3h-4zM379 140h4v3h-4zM51 143h8v4h-8zM62 143h8v4h-8zM74 143h3v4h-3zM85 143h11v4h-11zM108 143h3v4h-3zM127 143h7v4h-7zM138 143h7v4h-7zM149 143h4v4h-4zM160 143h27v4h-27zM191 143h3v4h-3zM202 143h4v4h-4zM225 143h3v4h-3zM232 143h4v4h-4zM240 143h22v4h-22zM270 143h4v4h-4zM285 143h8v4h-8zM296 143h8v4h-8zM308 143h11v4h-11zM323 143h3v4h-3zM330 143h4v4h-4zM338 143h7v4h-7zM353 143h4v4h-4zM368 143h4v4h-4zM376 143h7v4h-7zM89 147h4v4h-4zM100 147h11v4h-11zM115 147h4v4h-4zM127 147h7v4h-7zM142 147h3v4h-3zM160 147h4v4h-4zM168 147h8v4h-8zM187 147h4v4h-4zM194 147h4v4h-4zM202 147h4v4h-4zM221 147h11v4h-11zM247 147h4v4h-4zM255 147h4v4h-4zM262 147h4v4h-4zM270 147h4v4h-4zM300 147h4v4h-4zM311 147h8v4h-8zM330 147h8v4h-8zM357 147h7v4h-7zM376 147h3v4h-3zM51 151h4v4h-4zM77 151h4v4h-4zM89 151h4v4h-4zM104 151h7v4h-7zM115 151h4v4h-4zM123 151h7v4h-7zM160 151h4v4h-4zM168 151h4v4h-4zM202 151h4v4h-4zM225 151h3v4h-3zM232 151h4v4h-4zM255 151h4v4h-4zM262 151h12v4h-12zM300 151h4v4h-4zM330 151h4v4h-4zM51 155h4v4h-4zM59 155h11v4h-11zM77 155h12v4h-12zM100 155h4v4h-4zM108 155h11v4h-11zM123 155h4v4h-4zM130 155h4v4h-4zM142 155h3v4h-3zM153 155h4v4h-4zM164 155h8v4h-8zM179 155h4v4h-4zM194 155h4v4h-4zM202 155h4v4h-4zM225 155h3v4h-3zM232 155h11v4h-11zM251 155h8v4h-8zM262 155h4v4h-4zM274 155h3v4h-3zM281 155h4v4h-4zM293 155h3v4h-3zM300 155h8v4h-8zM311 155h8v4h-8zM323 155h3v4h-3zM334 155h8v4h-8zM357 155h7v4h-7zM376 155h7v4h-7zM51 159h4v3h-4zM62 159h4v3h-4zM74 159h7v3h-7zM115 159h4v3h-4zM123 159h7v3h-7zM134 159h4v3h-4zM145 159h4v3h-4zM202 159h4v3h-4zM210 159h3v3h-3zM285 159h4v3h-4zM304 159h4v3h-4zM311 159h4v3h-4zM330 159h4v3h-4zM342 159h3v3h-3zM349 159h4v3h-4zM364 159h4v3h-4zM379 159h4v3h-4zM51 162h4v4h-4zM74 162h3v4h-3zM111 162h4v4h-4zM123 162h7v4h-7zM160 162h4v4h-4zM172 162h4v4h-4zM187 162h4v4h-4zM194 162h4v4h-4zM206 162h7v4h-7zM221 162h4v4h-4zM232 162h4v4h-4zM243 162h12v4h-12zM259 162h3v4h-3zM266 162h4v4h-4zM277 162h4v4h-4zM315 162h8v4h-8zM334 162h4v4h-4zM345 162h4v4h-4zM353 162h4v4h-4zM372 162h7v4h-7zM59 166h3v4h-3zM81 166h4v4h-4zM89 166h4v4h-4zM108 166h7v4h-7zM127 166h3v4h-3zM160 166h4v4h-4zM176 166h3v4h-3zM194 166h4v4h-4zM221 166h7v4h-7zM236 166h15v4h-15zM270 166h4v4h-4zM281 166h4v4h-4zM296 166h4v4h-4zM311 166h8v4h-8zM326 166h8v4h-8zM338 166h4v4h-4zM357 166h3v4h-3zM368 166h4v4h-4zM379 166h4v4h-4zM51 170h15v4h-15zM70 170h7v4h-7zM81 170h8v4h-8zM108 170h3v4h-3zM115 170h4v4h-4zM134 170h4v4h-4zM149 170h8v4h-8zM172 170h4v4h-4zM187 170h4v4h-4zM213 170h4v4h-4zM225 170h7v4h-7zM236 170h7v4h-7zM262 170h4v4h-4zM270 170h7v4h-7zM281 170h8v4h-8zM300 170h4v4h-4zM311 170h8v4h-8zM334 170h11v4h-11zM51 174h4v3h-4zM62 174h8v3h-8zM74 174h19v3h-19zM100 174h8v3h-8zM111 174h8v3h-8zM123 174h4v3h-4zM130 174h4v3h-4zM138 174h7v3h-7zM149 174h19v3h-19zM172 174h7v3h-7zM183 174h4v3h-4zM191 174h7v3h-7zM202 174h4v3h-4zM217 174h4v3h-4zM232 174h8v3h-8zM243 174h16v3h-16zM266 174h8v3h-8zM277 174h16v3h-16zM296 174h4v3h-4zM323 174h7v3h-7zM334 174h8v3h-8zM368 174h4v3h-4zM66 177h4v4h-4zM89 177h4v4h-4zM96 177h8v4h-8zM108 177h3v4h-3zM119 177h4v4h-4zM134 177h4v4h-4zM160 177h4v4h-4zM187 177h11v4h-11zM206 177h4v4h-4zM217 177h4v4h-4zM228 177h4v4h-4zM236 177h4v4h-4zM247 177h4v4h-4zM255 177h4v4h-4zM277 177h12v4h-12zM311 177h4v4h-4zM319 177h4v4h-4zM326 177h16v4h-16zM349 177h4v4h-4zM360 177h4v4h-4zM372 177h11v4h-11zM51 181h4v4h-4zM59 181h3v4h-3zM74 181h3v4h-3zM81 181h15v4h-15zM104 181h7v4h-7zM119 181h11v4h-11zM134 181h15v4h-15zM164 181h8v4h-8zM179 181h4v4h-4zM187 181h4v4h-4zM198 181h4v4h-4zM206 181h4v4h-4zM217 181h11v4h-11zM232 181h4v4h-4zM240 181h3v4h-3zM247 181h12v4h-12zM270 181h23v4h-23zM296 181h4v4h-4zM311 181h12v4h-12zM330 181h8v4h-8zM349 181h4v4h-4zM357 181h3v4h-3zM368 181h4v4h-4zM379 181h4v4h-4zM51 185h8v4h-8zM70 185h7v4h-7zM111 185h8v4h-8zM123 185h7v4h-7zM134 185h4v4h-4zM145 185h4v4h-4zM160 185h8v4h-8zM172 185h4v4h-4zM179 185h4v4h-4zM187 185h7v4h-7zM198 185h8v4h-8zM213 185h27v4h-27zM247 185h4v4h-4zM262 185h8v4h-8zM274 185h3v4h-3zM285 185h4v4h-4zM300 185h8v4h-8zM311 185h4v4h-4zM323 185h3v4h-3zM360 185h12v4h-12zM379 185h4v4h-4zM51 189h15v4h-15zM70 189h4v4h-4zM85 189h15v4h-15zM108 189h3v4h-3zM115 189h8v4h-8zM127 189h11v4h-11zM149 189h19v4h-19zM183 189h15v4h-15zM217 189h4v4h-4zM225 189h7v4h-7zM236 189h4v4h-4zM243 189h4v4h-4zM251 189h4v4h-4zM259 189h3v4h-3zM270 189h7v4h-7zM281 189h4v4h-4zM289 189h4v4h-4zM296 189h12v4h-12zM315 189h4v4h-4zM330 189h12v4h-12zM345 189h4v4h-4zM368 189h4v4h-4zM376 189h3v4h-3zM51 193h4v3h-4zM59 193h3v3h-3zM66 193h23v3h-23zM93 193h11v3h-11zM115 193h12v3h-12zM130 193h8v3h-8zM142 193h3v3h-3zM149 193h4v3h-4zM164 193h4v3h-4zM172 193h7v3h-7zM187 193h4v3h-4zM194 193h4v3h-4zM206 193h4v3h-4zM213 193h15v3h-15zM236 193h26v3h-26zM266 193h19v3h-19zM289 193h4v3h-4zM296 193h4v3h-4zM304 193h11v3h-11zM330 193h15v3h-15zM349 193h8v3h-8zM368 193h4v3h-4zM379 193h4v3h-4zM55 196h4v4h-4zM66 196h8v4h-8zM77 196h8v4h-8zM89 196h4v4h-4zM108 196h3v4h-3zM123 196h7v4h-7zM142 196h3v4h-3zM153 196h19v4h-19zM176 196h7v4h-7zM194 196h16v4h-16zM217 196h15v4h-15zM236 196h7v4h-7zM247 196h12v4h-12zM266 196h27v4h-27zM296 196h12v4h-12zM311 196h4v4h-4zM326 196h8v4h-8zM338 196h4v4h-4zM345 196h4v4h-4zM353 196h7v4h-7zM368 196h15v4h-15zM51 200h11v4h-11zM66 200h8v4h-8zM93 200h3v4h-3zM104 200h4v4h-4zM111 200h19v4h-19zM138 200h7v4h-7zM149 200h4v4h-4zM160 200h8v4h-8zM172 200h4v4h-4zM179 200h4v4h-4zM187 200h23v4h-23zM217 200h11v4h-11zM236 200h4v4h-4zM247 200h4v4h-4zM262 200h4v4h-4zM270 200h4v4h-4zM277 200h8v4h-8zM289 200h4v4h-4zM300 200h8v4h-8zM311 200h4v4h-4zM319 200h4v4h-4zM326 200h4v4h-4zM334 200h8v4h-8zM345 200h4v4h-4zM353 200h4v4h-4zM360 200h4v4h-4zM376 200h3v4h-3zM77 204h4v4h-4zM108 204h3v4h-3zM115 204h4v4h-4zM134 204h4v4h-4zM168 204h4v4h-4zM176 204h3v4h-3zM183 204h8v4h-8zM213 204h4v4h-4zM228 204h4v4h-4zM251 204h11v4h-11zM270 204h4v4h-4zM300 204h4v4h-4zM311 204h8v4h-8zM323 204h3v4h-3zM372 204h4v4h-4zM51 208h19v3h-19zM74 208h11v3h-11zM89 208h4v3h-4zM108 208h3v3h-3zM115 208h4v3h-4zM127 208h11v3h-11zM153 208h4v3h-4zM160 208h8v3h-8zM172 208h15v3h-15zM191 208h3v3h-3zM221 208h4v3h-4zM228 208h8v3h-8zM240 208h3v3h-3zM247 208h15v3h-15zM266 208h8v3h-8zM281 208h8v3h-8zM293 208h3v3h-3zM304 208h4v3h-4zM311 208h4v3h-4zM319 208h19v3h-19zM353 208h4v3h-4zM51 211h4v4h-4zM93 211h3v4h-3zM115 211h8v4h-8zM160 211h8v4h-8zM179 211h4v4h-4zM194 211h4v4h-4zM206 211h4v4h-4zM217 211h4v4h-4zM289 211h4v4h-4zM319 211h4v4h-4zM326 211h8v4h-8zM338 211h4v4h-4zM364 211h4v4h-4zM51 215h8v4h-8zM70 215h4v4h-4zM77 215h4v4h-4zM104 215h7v4h-7zM123 215h7v4h-7zM134 215h4v4h-4zM153 215h7v4h-7zM168 215h8v4h-8zM179 215h4v4h-4zM210 215h3v4h-3zM221 215h11v4h-11zM236 215h4v4h-4zM251 215h4v4h-4zM259 215h3v4h-3zM266 215h8v4h-8zM293 215h11v4h-11zM308 215h3v4h-3zM315 215h8v4h-8zM334 215h4v4h-4zM342 215h3v4h-3zM353 215h4v4h-4zM360 215h16v4h-16zM379 215h4v4h-4zM51 219h4v4h-4zM59 219h7v4h-7zM70 219h4v4h-4zM89 219h4v4h-4zM104 219h7v4h-7zM123 219h4v4h-4zM130 219h4v4h-4zM142 219h3v4h-3zM149 219h4v4h-4zM157 219h7v4h-7zM176 219h7v4h-7zM187 219h11v4h-11zM202 219h4v4h-4zM213 219h4v4h-4zM221 219h7v4h-7zM232 219h19v4h-19zM259 219h7v4h-7zM270 219h7v4h-7zM285 219h8v4h-8zM300 219h8v4h-8zM315 219h8v4h-8zM334 219h4v4h-4zM357 219h3v4h-3zM368 219h4v4h-4zM55 223h7v3h-7zM108 223h3v3h-3zM123 223h4v3h-4zM130 223h4v3h-4zM149 223h8v3h-8zM172 223h15v3h-15zM217 223h4v3h-4zM228 223h4v3h-4zM259 223h3v3h-3zM296 223h4v3h-4zM323 223h3v3h-3zM334 223h11v3h-11zM364 223h8v3h-8zM379 223h4v3h-4zM55 226h7v4h-7zM70 226h19v4h-19zM96 226h8v4h-8zM108 226h7v4h-7zM119 226h8v4h-8zM130 226h8v4h-8zM142 226h7v4h-7zM153 226h4v4h-4zM168 226h8v4h-8zM179 226h12v4h-12zM194 226h4v4h-4zM202 226h49v4h-49zM255 226h7v4h-7zM270 226h7v4h-7zM281 226h8v4h-8zM296 226h42v4h-42zM349 226h15v4h-15zM372 226h11v4h-11zM51 230h8v4h-8zM70 230h11v4h-11zM89 230h4v4h-4zM108 230h3v4h-3zM115 230h23v4h-23zM142 230h7v4h-7zM168 230h4v4h-4zM179 230h19v4h-19zM202 230h4v4h-4zM210 230h3v4h-3zM221 230h11v4h-11zM240 230h3v4h-3zM247 230h4v4h-4zM255 230h7v4h-7zM266 230h8v4h-8zM285 230h4v4h-4zM293 230h15v4h-15zM311 230h12v4h-12zM326 230h12v4h-12zM345 230h8v4h-8zM364 230h4v4h-4zM51 234h42v4h-42zM115 234h4v4h-4zM130 234h4v4h-4zM138 234h4v4h-4zM149 234h4v4h-4zM160 234h8v4h-8zM176 234h3v4h-3zM191 234h3v4h-3zM210 234h7v4h-7zM225 234h3v4h-3zM236 234h4v4h-4zM243 234h4v4h-4zM251 234h15v4h-15zM270 234h4v4h-4zM281 234h12v4h-12zM300 234h8v4h-8zM319 234h4v4h-4zM326 234h8v4h-8zM338 234h4v4h-4zM349 234h4v4h-4zM357 234h3v4h-3zM364 234h4v4h-4zM379 234h4v4h-4zM51 238h4v4h-4zM70 238h4v4h-4zM77 238h8v4h-8zM96 238h4v4h-4zM104 238h7v4h-7zM119 238h4v4h-4zM127 238h3v4h-3zM134 238h4v4h-4zM142 238h3v4h-3zM149 238h4v4h-4zM157 238h7v4h-7zM176 238h7v4h-7zM187 238h4v4h-4zM194 238h8v4h-8zM206 238h4v4h-4zM213 238h4v4h-4zM221 238h7v4h-7zM236 238h7v4h-7zM247 238h4v4h-4zM255 238h7v4h-7zM270 238h4v4h-4zM281 238h4v4h-4zM289 238h19v4h-19zM334 238h8v4h-8zM357 238h7v4h-7zM379 238h4v4h-4zM70 242h11v3h-11zM100 242h4v3h-4zM108 242h3v3h-3zM127 242h7v3h-7zM138 242h7v3h-7zM153 242h7v3h-7zM168 242h8v3h-8zM179 242h8v3h-8zM210 242h3v3h-3zM217 242h4v3h-4zM240 242h3v3h-3zM247 242h15v3h-15zM266 242h4v3h-4zM281 242h4v3h-4zM319 242h4v3h-4zM330 242h8v3h-8zM342 242h3v3h-3zM357 242h3v3h-3zM368 242h4v3h-4zM376 242h3v3h-3zM51 245h11v4h-11zM66 245h8v4h-8zM77 245h4v4h-4zM89 245h4v4h-4zM115 245h8v4h-8zM130 245h8v4h-8zM142 245h26v4h-26zM172 245h7v4h-7zM183 245h19v4h-19zM206 245h4v4h-4zM217 245h4v4h-4zM236 245h7v4h-7zM251 245h11v4h-11zM270 245h4v4h-4zM285 245h4v4h-4zM293 245h3v4h-3zM300 245h26v4h-26zM330 245h15v4h-15zM360 245h8v4h-8zM376 245h3v4h-3zM55 249h4v4h-4zM74 249h7v4h-7zM108 249h3v4h-3zM123 249h4v4h-4zM138 249h7v4h-7zM157 249h11v4h-11zM176 249h7v4h-7zM187 249h4v4h-4zM210 249h3v4h-3zM221 249h4v4h-4zM228 249h4v4h-4zM243 249h4v4h-4zM255 249h19v4h-19zM285 249h4v4h-4zM300 249h4v4h-4zM308 249h15v4h-15zM353 249h4v4h-4zM364 249h4v4h-4zM379 249h4v4h-4zM51 253h4v4h-4zM70 253h4v4h-4zM81 253h4v4h-4zM96 253h4v4h-4zM104 253h4v4h-4zM111 253h19v4h-19zM134 253h8v4h-8zM153 253h4v4h-4zM160 253h8v4h-8zM172 253h4v4h-4zM179 253h8v4h-8zM191 253h11v4h-11zM206 253h7v4h-7zM217 253h15v4h-15zM236 253h7v4h-7zM289 253h4v4h-4zM308 253h3v4h-3zM315 253h8v4h-8zM326 253h8v4h-8zM338 253h11v4h-11zM357 253h11v4h-11zM372 253h4v4h-4zM379 253h4v4h-4zM55 257h4v3h-4zM62 257h19v3h-19zM108 257h7v3h-7zM119 257h8v3h-8zM134 257h4v3h-4zM142 257h3v3h-3zM153 257h4v3h-4zM164 257h8v3h-8zM179 257h4v3h-4zM187 257h4v3h-4zM202 257h8v3h-8zM213 257h4v3h-4zM221 257h4v3h-4zM228 257h8v3h-8zM247 257h4v3h-4zM259 257h15v3h-15zM281 257h12v3h-12zM300 257h4v3h-4zM311 257h8v3h-8zM323 257h15v3h-15zM342 257h3v3h-3zM357 257h3v3h-3zM364 257h4v3h-4zM379 257h4v3h-4zM51 260h8v4h-8zM66 260h8v4h-8zM81 260h4v4h-4zM89 260h4v4h-4zM96 260h8v4h-8zM108 260h7v4h-7zM123 260h15v4h-15zM145 260h4v4h-4zM153 260h4v4h-4zM160 260h8v4h-8zM172 260h4v4h-4zM179 260h4v4h-4zM187 260h4v4h-4zM198 260h8v4h-8zM210 260h3v4h-3zM217 260h11v4h-11zM243 260h16v4h-16zM262 260h4v4h-4zM281 260h8v4h-8zM296 260h8v4h-8zM311 260h12v4h-12zM326 260h4v4h-4zM334 260h8v4h-8zM345 260h8v4h-8zM360 260h4v4h-4zM376 260h7v4h-7zM59 264h3v4h-3zM70 264h4v4h-4zM115 264h8v4h-8zM130 264h8v4h-8zM172 264h4v4h-4zM179 264h4v4h-4zM187 264h4v4h-4zM194 264h4v4h-4zM240 264h3v4h-3zM255 264h4v4h-4zM277 264h4v4h-4zM285 264h4v4h-4zM311 264h4v4h-4zM319 264h4v4h-4zM357 264h3v4h-3zM51 268h4v4h-4zM62 268h4v4h-4zM74 268h22v4h-22zM108 268h3v4h-3zM119 268h4v4h-4zM130 268h8v4h-8zM153 268h4v4h-4zM160 268h8v4h-8zM191 268h7v4h-7zM210 268h3v4h-3zM225 268h7v4h-7zM236 268h4v4h-4zM243 268h4v4h-4zM262 268h4v4h-4zM285 268h8v4h-8zM300 268h8v4h-8zM315 268h4v4h-4zM330 268h4v4h-4zM349 268h4v4h-4zM368 268h4v4h-4zM379 268h4v4h-4zM51 272h4v4h-4zM59 272h3v4h-3zM70 272h4v4h-4zM96 272h4v4h-4zM111 272h8v4h-8zM127 272h11v4h-11zM145 272h4v4h-4zM160 272h4v4h-4zM172 272h4v4h-4zM179 272h4v4h-4zM187 272h7v4h-7zM210 272h3v4h-3zM221 272h15v4h-15zM247 272h4v4h-4zM255 272h7v4h-7zM266 272h11v4h-11zM285 272h8v4h-8zM296 272h8v4h-8zM311 272h4v4h-4zM319 272h4v4h-4zM326 272h4v4h-4zM334 272h8v4h-8zM345 272h8v4h-8zM360 272h4v4h-4zM376 272h7v4h-7zM55 276h7v3h-7zM70 276h4v3h-4zM93 276h7v3h-7zM149 276h4v3h-4zM160 276h12v3h-12zM176 276h3v3h-3zM183 276h8v3h-8zM194 276h4v3h-4zM202 276h8v3h-8zM217 276h4v3h-4zM232 276h8v3h-8zM243 276h8v3h-8zM255 276h7v3h-7zM266 276h8v3h-8zM285 276h8v3h-8zM296 276h8v3h-8zM311 276h8v3h-8zM326 276h4v3h-4zM342 276h7v3h-7zM353 276h4v3h-4zM364 276h8v3h-8zM104 279h4v4h-4zM119 279h4v4h-4zM127 279h3v4h-3zM138 279h4v4h-4zM153 279h4v4h-4zM160 279h4v4h-4zM168 279h8v4h-8zM191 279h3v4h-3zM228 279h4v4h-4zM251 279h11v4h-11zM266 279h4v4h-4zM274 279h3v4h-3zM285 279h4v4h-4zM311 279h4v4h-4zM334 279h4v4h-4zM55 283h19v4h-19zM108 283h30v4h-30zM145 283h4v4h-4zM157 283h7v4h-7zM176 283h7v4h-7zM187 283h4v4h-4zM194 283h4v4h-4zM210 283h3v4h-3zM221 283h15v4h-15zM240 283h3v4h-3zM259 283h3v4h-3zM281 283h15v4h-15zM304 283h4v4h-4zM319 283h4v4h-4zM330 283h4v4h-4zM338 283h4v4h-4zM353 283h4v4h-4zM368 283h8v4h-8zM379 283h4v4h-4zM51 287h4v4h-4zM59 287h3v4h-3zM66 287h11v4h-11zM81 287h4v4h-4zM96 287h8v4h-8zM115 287h8v4h-8zM127 287h11v4h-11zM142 287h3v4h-3zM149 287h8v4h-8zM160 287h8v4h-8zM172 287h4v4h-4zM183 287h15v4h-15zM206 287h4v4h-4zM217 287h4v4h-4zM225 287h3v4h-3zM232 287h8v4h-8zM247 287h4v4h-4zM255 287h4v4h-4zM266 287h4v4h-4zM274 287h3v4h-3zM281 287h23v4h-23zM315 287h4v4h-4zM330 287h12v4h-12zM357 287h3v4h-3zM364 287h8v4h-8zM379 287h4v4h-4zM51 291h8v3h-8zM70 291h4v3h-4zM77 291h16v3h-16zM100 291h8v3h-8zM115 291h23v3h-23zM149 291h8v3h-8zM160 291h16v3h-16zM187 291h4v3h-4zM194 291h4v3h-4zM202 291h8v3h-8zM217 291h8v3h-8zM232 291h4v3h-4zM243 291h4v3h-4zM262 291h12v3h-12zM277 291h16v3h-16zM300 291h4v3h-4zM315 291h4v3h-4zM345 291h8v3h-8zM379 291h4v3h-4zM59 294h3v4h-3zM70 294h4v4h-4zM81 294h4v4h-4zM104 294h4v4h-4zM111 294h4v4h-4zM119 294h8v4h-8zM130 294h4v4h-4zM138 294h7v4h-7zM149 294h4v4h-4zM157 294h11v4h-11zM183 294h11v4h-11zM202 294h8v4h-8zM213 294h8v4h-8zM236 294h4v4h-4zM266 294h4v4h-4zM274 294h7v4h-7zM285 294h4v4h-4zM308 294h7v4h-7zM319 294h4v4h-4zM330 294h4v4h-4zM360 294h4v4h-4zM62 298h4v4h-4zM70 298h11v4h-11zM85 298h8v4h-8zM96 298h4v4h-4zM108 298h3v4h-3zM115 298h8v4h-8zM142 298h3v4h-3zM153 298h4v4h-4zM160 298h4v4h-4zM191 298h3v4h-3zM206 298h7v4h-7zM217 298h11v4h-11zM236 298h4v4h-4zM259 298h3v4h-3zM266 298h4v4h-4zM274 298h7v4h-7zM285 298h4v4h-4zM300 298h8v4h-8zM338 298h4v4h-4zM349 298h8v4h-8zM379 298h4v4h-4zM51 302h4v4h-4zM59 302h11v4h-11zM74 302h3v4h-3zM89 302h4v4h-4zM100 302h15v4h-15zM119 302h19v4h-19zM149 302h8v4h-8zM160 302h4v4h-4zM168 302h8v4h-8zM179 302h4v4h-4zM187 302h4v4h-4zM202 302h4v4h-4zM210 302h3v4h-3zM221 302h4v4h-4zM228 302h8v4h-8zM240 302h3v4h-3zM247 302h4v4h-4zM255 302h7v4h-7zM277 302h4v4h-4zM285 302h4v4h-4zM293 302h7v4h-7zM315 302h4v4h-4zM326 302h16v4h-16zM349 302h4v4h-4zM368 302h4v4h-4zM376 302h7v4h-7zM51 306h4v3h-4zM66 306h8v3h-8zM77 306h4v3h-4zM89 306h4v3h-4zM100 306h8v3h-8zM115 306h4v3h-4zM127 306h7v3h-7zM142 306h3v3h-3zM153 306h4v3h-4zM160 306h8v3h-8zM172 306h11v3h-11zM187 306h4v3h-4zM198 306h4v3h-4zM217 306h4v3h-4zM236 306h4v3h-4zM247 306h4v3h-4zM262 306h4v3h-4zM270 306h7v3h-7zM281 306h8v3h-8zM311 306h4v3h-4zM319 306h4v3h-4zM334 306h4v3h-4zM349 306h4v3h-4zM357 306h7v3h-7zM70 309h4v4h-4zM77 309h4v4h-4zM96 309h8v4h-8zM108 309h3v4h-3zM123 309h7v4h-7zM153 309h4v4h-4zM160 309h4v4h-4zM168 309h4v4h-4zM183 309h4v4h-4zM194 309h4v4h-4zM202 309h4v4h-4zM210 309h3v4h-3zM225 309h3v4h-3zM270 309h4v4h-4zM277 309h4v4h-4zM289 309h4v4h-4zM300 309h4v4h-4zM315 309h4v4h-4zM323 309h3v4h-3zM368 309h4v4h-4zM55 313h7v4h-7zM66 313h19v4h-19zM96 313h8v4h-8zM108 313h15v4h-15zM127 313h11v4h-11zM142 313h3v4h-3zM153 313h4v4h-4zM160 313h8v4h-8zM172 313h7v4h-7zM191 313h7v4h-7zM206 313h7v4h-7zM221 313h4v4h-4zM236 313h7v4h-7zM255 313h7v4h-7zM266 313h4v4h-4zM281 313h15v4h-15zM300 313h8v4h-8zM311 313h12v4h-12zM326 313h4v4h-4zM334 313h4v4h-4zM345 313h8v4h-8zM357 313h3v4h-3zM364 313h4v4h-4zM376 313h7v4h-7zM59 317h3v4h-3zM66 317h4v4h-4zM77 317h4v4h-4zM89 317h4v4h-4zM96 317h4v4h-4zM108 317h3v4h-3zM115 317h4v4h-4zM123 317h11v4h-11zM138 317h7v4h-7zM149 317h4v4h-4zM168 317h4v4h-4zM176 317h7v4h-7zM194 317h4v4h-4zM213 317h4v4h-4zM281 317h4v4h-4zM293 317h3v4h-3zM300 317h4v4h-4zM315 317h4v4h-4zM323 317h3v4h-3zM330 317h4v4h-4zM357 317h3v4h-3zM70 321h23v4h-23zM108 321h11v4h-11zM127 321h7v4h-7zM138 321h7v4h-7zM160 321h27v4h-27zM194 321h8v4h-8zM206 321h11v4h-11zM221 321h4v4h-4zM236 321h4v4h-4zM247 321h4v4h-4zM259 321h3v4h-3zM274 321h3v4h-3zM281 321h4v4h-4zM293 321h3v4h-3zM300 321h4v4h-4zM311 321h23v4h-23zM338 321h4v4h-4zM353 321h7v4h-7zM364 321h4v4h-4zM70 325h11v3h-11zM96 325h4v3h-4zM123 325h7v3h-7zM138 325h7v3h-7zM149 325h38v3h-38zM191 325h3v3h-3zM206 325h15v3h-15zM232 325h8v3h-8zM247 325h4v3h-4zM255 325h4v3h-4zM266 325h8v3h-8zM285 325h8v3h-8zM300 325h11v3h-11zM315 325h23v3h-23zM349 325h4v3h-4zM357 325h11v3h-11zM376 325h7v3h-7zM55 328h4v4h-4zM74 328h3v4h-3zM81 328h12v4h-12zM104 328h4v4h-4zM119 328h4v4h-4zM134 328h4v4h-4zM153 328h4v4h-4zM168 328h4v4h-4zM183 328h4v4h-4zM191 328h7v4h-7zM202 328h4v4h-4zM225 328h3v4h-3zM240 328h3v4h-3zM266 328h8v4h-8zM277 328h4v4h-4zM285 328h4v4h-4zM293 328h3v4h-3zM300 328h8v4h-8zM315 328h4v4h-4zM330 328h4v4h-4zM338 328h4v4h-4zM51 332h15v4h-15zM70 332h7v4h-7zM85 332h4v4h-4zM96 332h4v4h-4zM108 332h3v4h-3zM119 332h4v4h-4zM127 332h7v4h-7zM142 332h3v4h-3zM149 332h4v4h-4zM164 332h4v4h-4zM176 332h3v4h-3zM183 332h4v4h-4zM191 332h3v4h-3zM206 332h11v4h-11zM221 332h15v4h-15zM247 332h4v4h-4zM259 332h7v4h-7zM270 332h4v4h-4zM289 332h4v4h-4zM296 332h8v4h-8zM311 332h12v4h-12zM330 332h12v4h-12zM353 332h4v4h-4zM364 332h12v4h-12zM379 332h4v4h-4zM55 336h34v4h-34zM100 336h11v4h-11zM115 336h4v4h-4zM123 336h22v4h-22zM149 336h8v4h-8zM160 336h16v4h-16zM179 336h8v4h-8zM191 336h3v4h-3zM206 336h7v4h-7zM225 336h3v4h-3zM240 336h7v4h-7zM259 336h11v4h-11zM274 336h3v4h-3zM281 336h12v4h-12zM304 336h7v4h-7zM315 336h8v4h-8zM334 336h8v4h-8zM349 336h4v4h-4zM357 336h3v4h-3zM55 340h4v3h-4zM62 340h4v3h-4zM70 340h7v3h-7zM89 340h4v3h-4zM104 340h4v3h-4zM115 340h19v3h-19zM153 340h4v3h-4zM160 340h4v3h-4zM206 340h4v3h-4zM213 340h4v3h-4zM221 340h4v3h-4zM228 340h8v3h-8zM240 340h3v3h-3zM255 340h4v3h-4zM270 340h4v3h-4zM285 340h8v3h-8zM338 340h4v3h-4zM379 340h4v3h-4zM59 343h3v4h-3zM66 343h11v4h-11zM96 343h4v4h-4zM108 343h11v4h-11zM127 343h11v4h-11zM198 343h4v4h-4zM225 343h15v4h-15zM243 343h4v4h-4zM262 343h4v4h-4zM281 343h4v4h-4zM296 343h12v4h-12zM315 343h4v4h-4zM349 343h4v4h-4zM357 343h3v4h-3zM364 343h8v4h-8zM379 343h4v4h-4zM74 347h3v4h-3zM89 347h4v4h-4zM100 347h19v4h-19zM123 347h15v4h-15zM142 347h3v4h-3zM160 347h4v4h-4zM168 347h11v4h-11zM191 347h7v4h-7zM217 347h11v4h-11zM240 347h3v4h-3zM247 347h12v4h-12zM270 347h4v4h-4zM277 347h4v4h-4zM296 347h12v4h-12zM315 347h8v4h-8zM330 347h12v4h-12zM357 347h7v4h-7zM368 347h8v4h-8zM379 347h4v4h-4zM51 351h8v4h-8zM62 351h8v4h-8zM77 351h4v4h-4zM93 351h3v4h-3zM104 351h19v4h-19zM130 351h4v4h-4zM142 351h3v4h-3zM153 351h4v4h-4zM160 351h12v4h-12zM179 351h8v4h-8zM191 351h52v4h-52zM247 351h4v4h-4zM259 351h7v4h-7zM270 351h7v4h-7zM289 351h19v4h-19zM311 351h8v4h-8zM323 351h22v4h-22zM360 351h23v4h-23zM51 355h30v4h-30zM108 355h3v4h-3zM115 355h4v4h-4zM123 355h15v4h-15zM145 355h4v4h-4zM153 355h4v4h-4zM168 355h8v4h-8zM187 355h7v4h-7zM202 355h11v4h-11zM217 355h11v4h-11zM243 355h8v4h-8zM259 355h3v4h-3zM266 355h11v4h-11zM285 355h4v4h-4zM296 355h23v4h-23zM330 355h15v4h-15zM364 355h8v4h-8zM376 355h3v4h-3zM70 359h4v3h-4zM89 359h4v3h-4zM142 359h3v3h-3zM149 359h4v3h-4zM164 359h4v3h-4zM172 359h4v3h-4zM179 359h4v3h-4zM217 359h8v3h-8zM236 359h4v3h-4zM247 359h12v3h-12zM262 359h4v3h-4zM285 359h4v3h-4zM296 359h4v3h-4zM308 359h11v3h-11zM323 359h7v3h-7zM334 359h4v3h-4zM342 359h3v3h-3zM349 359h4v3h-4zM376 359h7v3h-7zM55 362h26v4h-26zM100 362h4v4h-4zM108 362h3v4h-3zM115 362h4v4h-4zM123 362h11v4h-11zM149 362h4v4h-4zM157 362h11v4h-11zM172 362h4v4h-4zM194 362h4v4h-4zM206 362h7v4h-7zM221 362h4v4h-4zM236 362h4v4h-4zM266 362h4v4h-4zM277 362h19v4h-19zM300 362h4v4h-4zM308 362h3v4h-3zM315 362h4v4h-4zM330 362h4v4h-4zM338 362h7v4h-7zM349 362h4v4h-4zM364 362h15v4h-15zM51 366h8v4h-8zM66 366h27v4h-27zM104 366h4v4h-4zM119 366h8v4h-8zM130 366h12v4h-12zM149 366h8v4h-8zM160 366h16v4h-16zM179 366h8v4h-8zM191 366h7v4h-7zM202 366h11v4h-11zM221 366h7v4h-7zM232 366h4v4h-4zM243 366h27v4h-27zM277 366h16v4h-16zM296 366h4v4h-4zM304 366h4v4h-4zM311 366h8v4h-8zM326 366h27v4h-27zM357 366h3v4h-3zM368 366h15v4h-15zM59 370h18v4h-18zM89 370h7v4h-7zM119 370h19v4h-19zM142 370h3v4h-3zM153 370h4v4h-4zM160 370h16v4h-16zM179 370h4v4h-4zM202 370h4v4h-4zM217 370h4v4h-4zM232 370h4v4h-4zM247 370h4v4h-4zM259 370h7v4h-7zM270 370h4v4h-4zM277 370h16v4h-16zM300 370h4v4h-4zM315 370h4v4h-4zM330 370h12v4h-12zM349 370h4v4h-4zM357 370h3v4h-3zM376 370h7v4h-7zM77 374h4v3h-4zM127 374h3v3h-3zM149 374h4v3h-4zM160 374h4v3h-4zM179 374h12v3h-12zM228 374h4v3h-4zM259 374h3v3h-3zM270 374h4v3h-4zM289 374h11v3h-11zM319 374h4v3h-4zM330 374h8v3h-8zM342 374h3v3h-3zM364 374h4v3h-4zM51 377h4v4h-4zM59 377h26v4h-26zM89 377h7v4h-7zM100 377h8v4h-8zM111 377h12v4h-12zM127 377h18v4h-18zM160 377h8v4h-8zM179 377h8v4h-8zM191 377h11v4h-11zM206 377h11v4h-11zM228 377h4v4h-4zM240 377h3v4h-3zM247 377h4v4h-4zM255 377h4v4h-4zM266 377h4v4h-4zM285 377h11v4h-11zM300 377h4v4h-4zM315 377h4v4h-4zM326 377h16v4h-16zM360 377h8v4h-8zM51 381h4v4h-4zM62 381h4v4h-4zM70 381h15v4h-15zM89 381h4v4h-4zM96 381h12v4h-12zM115 381h4v4h-4zM123 381h4v4h-4zM138 381h4v4h-4zM149 381h8v4h-8zM160 381h8v4h-8zM179 381h19v4h-19zM202 381h4v4h-4zM210 381h3v4h-3zM221 381h7v4h-7zM236 381h4v4h-4zM243 381h31v4h-31zM277 381h31v4h-31zM311 381h4v4h-4zM330 381h4v4h-4zM345 381h8v4h-8zM357 381h3v4h-3zM364 381h8v4h-8zM51 385h4v4h-4zM59 385h3v4h-3zM66 385h11v4h-11zM96 385h4v4h-4zM111 385h8v4h-8zM134 385h4v4h-4zM142 385h15v4h-15zM160 385h12v4h-12zM176 385h15v4h-15zM194 385h8v4h-8zM206 385h4v4h-4zM217 385h4v4h-4zM228 385h4v4h-4zM240 385h3v4h-3zM247 385h4v4h-4zM255 385h7v4h-7zM266 385h8v4h-8zM281 385h4v4h-4zM308 385h3v4h-3zM326 385h12v4h-12zM353 385h4v4h-4zM364 385h8v4h-8zM379 385h4v4h-4zM66 389h8v3h-8zM77 389h4v3h-4zM89 389h4v3h-4zM108 389h3v3h-3zM119 389h4v3h-4zM138 389h7v3h-7zM157 389h7v3h-7zM179 389h4v3h-4zM191 389h3v3h-3zM243 389h4v3h-4zM251 389h11v3h-11zM285 389h4v3h-4zM293 389h3v3h-3zM326 389h12v3h-12zM342 389h3v3h-3zM353 389h4v3h-4zM360 389h4v3h-4zM372 389h4v3h-4zM379 389h4v3h-4zM51 392h4v4h-4zM66 392h11v4h-11zM100 392h4v4h-4zM108 392h7v4h-7zM130 392h8v4h-8zM142 392h7v4h-7zM160 392h12v4h-12zM187 392h11v4h-11zM206 392h7v4h-7zM236 392h4v4h-4zM247 392h4v4h-4zM255 392h7v4h-7zM285 392h4v4h-4zM293 392h3v4h-3zM300 392h4v4h-4zM311 392h4v4h-4zM319 392h7v4h-7zM330 392h8v4h-8zM349 392h4v4h-4zM364 392h4v4h-4zM372 392h7v4h-7zM51 396h11v4h-11zM66 396h4v4h-4zM74 396h15v4h-15zM93 396h3v4h-3zM100 396h4v4h-4zM111 396h8v4h-8zM123 396h11v4h-11zM142 396h7v4h-7zM160 396h12v4h-12zM176 396h7v4h-7zM187 396h7v4h-7zM202 396h4v4h-4zM217 396h8v4h-8zM228 396h4v4h-4zM236 396h4v4h-4zM251 396h19v4h-19zM281 396h12v4h-12zM296 396h34v4h-34zM334 396h4v4h-4zM364 396h4v4h-4zM372 396h4v4h-4zM55 400h11v4h-11zM70 400h7v4h-7zM81 400h4v4h-4zM89 400h4v4h-4zM96 400h4v4h-4zM104 400h15v4h-15zM123 400h7v4h-7zM134 400h4v4h-4zM142 400h3v4h-3zM149 400h19v4h-19zM172 400h11v4h-11zM191 400h7v4h-7zM206 400h4v4h-4zM213 400h4v4h-4zM221 400h4v4h-4zM236 400h7v4h-7zM247 400h4v4h-4zM259 400h3v4h-3zM266 400h8v4h-8zM281 400h15v4h-15zM300 400h15v4h-15zM319 400h15v4h-15zM338 400h34v4h-34zM376 400h7v4h-7zM77 404h4v4h-4zM89 404h4v4h-4zM100 404h15v4h-15zM123 404h15v4h-15zM145 404h4v4h-4zM157 404h3v4h-3zM168 404h8v4h-8zM179 404h4v4h-4zM187 404h4v4h-4zM194 404h4v4h-4zM206 404h4v4h-4zM217 404h8v4h-8zM232 404h8v4h-8zM255 404h4v4h-4zM262 404h15v4h-15zM281 404h12v4h-12zM296 404h12v4h-12zM311 404h4v4h-4zM334 404h4v4h-4zM345 404h12v4h-12zM368 404h4v4h-4zM379 404h4v4h-4zM70 408h4v3h-4zM77 408h4v3h-4zM93 408h3v3h-3zM104 408h4v3h-4zM127 408h3v3h-3zM149 408h4v3h-4zM157 408h3v3h-3zM176 408h7v3h-7zM187 408h7v3h-7zM210 408h3v3h-3zM285 408h19v3h-19zM308 408h3v3h-3zM323 408h3v3h-3zM334 408h4v3h-4zM345 408h4v3h-4zM357 408h3v3h-3zM364 408h4v3h-4zM55 411h4v4h-4zM70 411h4v4h-4zM96 411h4v4h-4zM123 411h4v4h-4zM130 411h8v4h-8zM164 411h4v4h-4zM187 411h4v4h-4zM194 411h4v4h-4zM206 411h7v4h-7zM225 411h3v4h-3zM247 411h4v4h-4zM300 411h4v4h-4zM315 411h4v4h-4zM334 411h11v4h-11zM51 415h8v4h-8zM70 415h7v4h-7zM93 415h3v4h-3zM111 415h8v4h-8zM127 415h3v4h-3zM160 415h12v4h-12zM194 415h4v4h-4zM202 415h8v4h-8zM225 415h3v4h-3zM232 415h11v4h-11zM247 415h4v4h-4zM259 415h3v4h-3zM270 415h4v4h-4zM277 415h4v4h-4zM293 415h15v4h-15zM315 415h4v4h-4zM326 415h4v4h-4zM334 415h8v4h-8zM372 415h11v4h-11zM55 419h4v4h-4zM77 419h4v4h-4zM96 419h4v4h-4zM127 419h11v4h-11zM142 419h3v4h-3zM149 419h4v4h-4zM160 419h4v4h-4zM183 419h4v4h-4zM210 419h3v4h-3zM217 419h4v4h-4zM232 419h4v4h-4zM255 419h4v4h-4zM266 419h4v4h-4zM319 419h7v4h-7zM334 419h8v4h-8zM368 419h4v4h-4zM70 423h4v3h-4zM81 423h4v3h-4zM89 423h4v3h-4zM100 423h4v3h-4zM115 423h4v3h-4zM130 423h4v3h-4zM153 423h4v3h-4zM160 423h4v3h-4zM168 423h11v3h-11zM187 423h7v3h-7zM198 423h4v3h-4zM221 423h4v3h-4zM240 423h3v3h-3zM247 423h15v3h-15zM270 423h4v3h-4zM277 423h8v3h-8zM300 423h8v3h-8zM315 423h4v3h-4zM334 423h4v3h-4zM342 423h3v3h-3zM360 423h4v3h-4zM379 423h4v3h-4zM51 426h4v4h-4zM59 426h3v4h-3zM81 426h4v4h-4zM89 426h4v4h-4zM111 426h4v4h-4zM119 426h4v4h-4zM134 426h4v4h-4zM149 426h4v4h-4zM160 426h4v4h-4zM172 426h4v4h-4zM179 426h4v4h-4zM187 426h4v4h-4zM194 426h4v4h-4zM206 426h4v4h-4zM228 426h4v4h-4zM240 426h3v4h-3zM259 426h3v4h-3zM281 426h8v4h-8zM311 426h4v4h-4zM323 426h3v4h-3zM334 426h4v4h-4zM357 426h3v4h-3zM364 426h8v4h-8zM379 426h4v4h-4zM51 430h8v4h-8zM74 430h3v4h-3zM93 430h3v4h-3zM119 430h4v4h-4zM145 430h8v4h-8zM157 430h3v4h-3zM164 430h8v4h-8zM179 430h15v4h-15zM210 430h3v4h-3zM221 430h4v4h-4zM247 430h4v4h-4zM255 430h7v4h-7zM266 430h4v4h-4zM277 430h4v4h-4zM285 430h8v4h-8zM296 430h4v4h-4zM308 430h15v4h-15zM326 430h12v4h-12zM342 430h3v4h-3zM360 430h4v4h-4zM368 430h4v4h-4zM62 434h4v4h-4zM77 434h4v4h-4zM100 434h4v4h-4zM108 434h3v4h-3zM115 434h19v4h-19zM149 434h11v4h-11zM176 434h3v4h-3zM202 434h4v4h-4zM210 434h3v4h-3zM217 434h8v4h-8zM236 434h4v4h-4zM243 434h4v4h-4zM266 434h4v4h-4zM277 434h16v4h-16zM296 434h8v4h-8zM315 434h8v4h-8zM334 434h8v4h-8zM353 434h4v4h-4zM360 434h8v4h-8zM372 434h4v4h-4zM379 434h4v4h-4zM55 438h4v4h-4zM96 438h4v4h-4zM111 438h4v4h-4zM130 438h4v4h-4zM138 438h4v4h-4zM149 438h4v4h-4zM160 438h4v4h-4zM187 438h4v4h-4zM217 438h4v4h-4zM266 438h4v4h-4zM281 438h8v4h-8zM296 438h8v4h-8zM323 438h11v4h-11zM349 438h4v4h-4zM368 438h4v4h-4zM55 442h4v3h-4zM70 442h4v3h-4zM77 442h8v3h-8zM89 442h4v3h-4zM96 442h4v3h-4zM111 442h4v3h-4zM123 442h4v3h-4zM130 442h8v3h-8zM160 442h4v3h-4zM176 442h7v3h-7zM194 442h4v3h-4zM206 442h4v3h-4zM236 442h4v3h-4zM247 442h4v3h-4zM259 442h3v3h-3zM285 442h23v3h-23zM326 442h4v3h-4zM334 442h4v3h-4zM349 442h4v3h-4zM379 442h4v3h-4zM74 445h7v4h-7zM89 445h7v4h-7zM100 445h4v4h-4zM111 445h12v4h-12zM127 445h7v4h-7zM149 445h4v4h-4zM157 445h7v4h-7zM168 445h8v4h-8zM183 445h15v4h-15zM202 445h8v4h-8zM217 445h11v4h-11zM232 445h8v4h-8zM247 445h4v4h-4zM259 445h3v4h-3zM266 445h4v4h-4zM274 445h15v4h-15zM293 445h3v4h-3zM300 445h8v4h-8zM319 445h7v4h-7zM334 445h8v4h-8zM349 445h4v4h-4zM357 445h7v4h-7zM368 445h4v4h-4zM376 445h3v4h-3z"/><path fill="#ffff00" d="M62 117h4v4h-4zM130 117h4v4h-4zM138 117h4v4h-4zM176 117h3v4h-3zM183 117h4v4h-4zM191 117h3v4h-3zM210 117h3v4h-3zM217 117h4v4h-4zM232 117h4v4h-4zM243 117h4v4h-4zM251 117h4v4h-4zM270 117h11v4h-11zM296 117h4v4h-4zM304 117h4v4h-4zM334 117h8v4h-8zM353 117h4v4h-4zM368 117h4v4h-4zM379 117h4v4h-4zM59 121h11v4h-11zM74 121h3v4h-3zM81 121h4v4h-4zM89 121h15v4h-15zM108 121h7v4h-7zM127 121h3v4h-3zM138 121h4v4h-4zM172 121h7v4h-7zM187 121h4v4h-4zM198 121h4v4h-4zM206 121h4v4h-4zM221 121h4v4h-4zM228 121h8v4h-8zM240 121h3v4h-3zM259 121h3v4h-3zM281 121h4v4h-4zM304 121h7v4h-7zM315 121h4v4h-4zM323 121h7v4h-7zM342 121h3v4h-3zM368 121h4v4h-4zM379 121h4v4h-4zM55 125h4v3h-4zM66 125h4v3h-4zM77 125h12v3h-12zM93 125h7v3h-7zM108 125h7v3h-7zM130 125h4v3h-4zM138 125h4v3h-4zM149 125h4v3h-4zM164 125h4v3h-4zM172 125h7v3h-7zM183 125h8v3h-8zM202 125h4v3h-4zM225 125h3v3h-3zM240 125h3v3h-3zM255 125h11v3h-11zM281 125h4v3h-4zM315 125h4v3h-4zM338 125h4v3h-4zM349 125h4v3h-4zM368 125h4v3h-4zM376 125h3v3h-3zM51 128h8v4h-8zM66 128h8v4h-8zM81 128h8v4h-8zM96 128h8v4h-8zM111 128h12v4h-12zM127 128h15v4h-15zM157 128h7v4h-7zM176 128h3v4h-3zM187 128h4v4h-4zM194 128h4v4h-4zM210 128h7v4h-7zM221 128h4v4h-4zM240 128h3v4h-3zM247 128h4v4h-4zM255 128h4v4h-4zM262 128h4v4h-4zM277 128h8v4h-8zM300 128h4v4h-4zM308 128h3v4h-3zM319 128h4v4h-4zM326 128h8v4h-8zM338 128h4v4h-4zM349 128h4v4h-4zM357 128h7v4h-7zM376 128h3v4h-3zM55 132h11v4h-11zM85 132h4v4h-4zM115 132h4v4h-4zM123 132h4v4h-4zM153 132h4v4h-4zM164 132h4v4h-4zM172 132h7v4h-7zM187 132h4v4h-4zM202 132h8v4h-8zM255 132h4v4h-4zM262 132h4v4h-4zM274 132h3v4h-3zM281 132h4v4h-4zM293 132h3v4h-3zM315 132h4v4h-4zM334 132h4v4h-4zM349 132h23v4h-23zM62 136h4v4h-4zM77 136h4v4h-4zM93 136h11v4h-11zM108 136h3v4h-3zM138 136h7v4h-7zM157 136h3v4h-3zM183 136h4v4h-4zM202 136h4v4h-4zM236 136h4v4h-4zM281 136h8v4h-8zM338 136h4v4h-4zM360 136h12v4h-12zM379 136h4v4h-4zM55 140h4v3h-4zM85 140h8v3h-8zM111 140h4v3h-4zM123 140h4v3h-4zM130 140h12v3h-12zM179 140h4v3h-4zM187 140h4v3h-4zM198 140h4v3h-4zM206 140h11v3h-11zM225 140h7v3h-7zM240 140h3v3h-3zM293 140h3v3h-3zM323 140h3v3h-3zM338 140h7v3h-7zM353 140h4v3h-4zM372 140h7v3h-7zM59 143h3v4h-3zM70 143h4v4h-4zM96 143h4v4h-4zM111 143h4v4h-4zM123 143h4v4h-4zM134 143h4v4h-4zM153 143h4v4h-4zM187 143h4v4h-4zM194 143h4v4h-4zM210 143h11v4h-11zM228 143h4v4h-4zM236 143h4v4h-4zM266 143h4v4h-4zM274 143h11v4h-11zM293 143h3v4h-3zM345 143h4v4h-4zM55 147h11v4h-11zM85 147h4v4h-4zM96 147h4v4h-4zM111 147h4v4h-4zM138 147h4v4h-4zM145 147h4v4h-4zM176 147h3v4h-3zM191 147h3v4h-3zM198 147h4v4h-4zM210 147h3v4h-3zM240 147h3v4h-3zM251 147h4v4h-4zM277 147h4v4h-4zM285 147h4v4h-4zM293 147h3v4h-3zM308 147h3v4h-3zM326 147h4v4h-4zM338 147h7v4h-7zM349 147h8v4h-8zM368 147h4v4h-4zM59 151h11v4h-11zM74 151h3v4h-3zM81 151h4v4h-4zM93 151h7v4h-7zM111 151h4v4h-4zM134 151h4v4h-4zM142 151h3v4h-3zM164 151h4v4h-4zM191 151h3v4h-3zM206 151h4v4h-4zM213 151h4v4h-4zM243 151h4v4h-4zM274 151h7v4h-7zM296 151h4v4h-4zM304 151h4v4h-4zM338 151h4v4h-4zM372 151h4v4h-4zM55 155h4v4h-4zM74 155h3v4h-3zM127 155h3v4h-3zM134 155h8v4h-8zM160 155h4v4h-4zM172 155h4v4h-4zM187 155h4v4h-4zM206 155h4v4h-4zM213 155h12v4h-12zM243 155h4v4h-4zM266 155h8v4h-8zM277 155h4v4h-4zM285 155h4v4h-4zM319 155h4v4h-4zM326 155h4v4h-4zM353 155h4v4h-4zM368 155h4v4h-4zM55 159h7v3h-7zM70 159h4v3h-4zM85 159h4v3h-4zM96 159h8v3h-8zM130 159h4v3h-4zM149 159h4v3h-4zM157 159h7v3h-7zM168 159h4v3h-4zM183 159h8v3h-8zM217 159h4v3h-4zM225 159h3v3h-3zM236 159h4v3h-4zM262 159h8v3h-8zM277 159h4v3h-4zM289 159h7v3h-7zM308 159h3v3h-3zM315 159h4v3h-4zM326 159h4v3h-4zM345 159h4v3h-4zM368 159h4v3h-4zM55 162h11v4h-11zM70 162h4v4h-4zM77 162h12v4h-12zM93 162h3v4h-3zM100 162h4v4h-4zM108 162h3v4h-3zM115 162h8v4h-8zM130 162h15v4h-15zM149 162h8v4h-8zM176 162h3v4h-3zM183 162h4v4h-4zM191 162h3v4h-3zM202 162h4v4h-4zM213 162h4v4h-4zM240 162h3v4h-3zM255 162h4v4h-4zM270 162h7v4h-7zM289 162h7v4h-7zM300 162h8v4h-8zM323 162h7v4h-7zM338 162h4v4h-4zM349 162h4v4h-4zM360 162h4v4h-4zM379 162h4v4h-4zM55 166h4v4h-4zM62 166h4v4h-4zM70 166h4v4h-4zM93 166h7v4h-7zM104 166h4v4h-4zM119 166h4v4h-4zM134 166h8v4h-8zM145 166h8v4h-8zM168 166h4v4h-4zM179 166h4v4h-4zM187 166h4v4h-4zM202 166h11v4h-11zM228 166h8v4h-8zM255 166h4v4h-4zM277 166h4v4h-4zM304 166h4v4h-4zM319 166h4v4h-4zM334 166h4v4h-4zM349 166h4v4h-4zM372 166h4v4h-4zM100 170h4v4h-4zM111 170h4v4h-4zM130 170h4v4h-4zM138 170h4v4h-4zM145 170h4v4h-4zM168 170h4v4h-4zM176 170h11v4h-11zM191 170h7v4h-7zM202 170h8v4h-8zM217 170h8v4h-8zM247 170h4v4h-4zM255 170h4v4h-4zM266 170h4v4h-4zM289 170h11v4h-11zM304 170h4v4h-4zM323 170h7v4h-7zM349 170h4v4h-4zM368 170h4v4h-4zM376 170h3v4h-3zM55 174h7v3h-7zM70 174h4v3h-4zM96 174h4v3h-4zM127 174h3v3h-3zM134 174h4v3h-4zM187 174h4v3h-4zM210 174h7v3h-7zM221 174h4v3h-4zM240 174h3v3h-3zM259 174h3v3h-3zM274 174h3v3h-3zM300 174h8v3h-8zM315 174h4v3h-4zM342 174h3v3h-3zM360 174h4v3h-4zM372 174h4v3h-4zM379 174h4v3h-4zM55 177h11v4h-11zM74 177h15v4h-15zM104 177h4v4h-4zM123 177h4v4h-4zM138 177h19v4h-19zM164 177h8v4h-8zM176 177h7v4h-7zM198 177h4v4h-4zM221 177h4v4h-4zM232 177h4v4h-4zM240 177h3v4h-3zM266 177h8v4h-8zM289 177h7v4h-7zM300 177h8v4h-8zM323 177h3v4h-3zM368 177h4v4h-4zM62 181h8v4h-8zM96 181h4v4h-4zM130 181h4v4h-4zM153 181h7v4h-7zM172 181h4v4h-4zM183 181h4v4h-4zM213 181h4v4h-4zM228 181h4v4h-4zM259 181h11v4h-11zM304 181h4v4h-4zM338 181h4v4h-4zM353 181h4v4h-4zM62 185h4v4h-4zM96 185h8v4h-8zM130 185h4v4h-4zM138 185h7v4h-7zM149 185h8v4h-8zM168 185h4v4h-4zM206 185h7v4h-7zM255 185h4v4h-4zM277 185h4v4h-4zM319 185h4v4h-4zM326 185h12v4h-12zM345 185h4v4h-4zM353 185h4v4h-4zM372 185h7v4h-7zM66 189h4v4h-4zM74 189h7v4h-7zM111 189h4v4h-4zM138 189h7v4h-7zM179 189h4v4h-4zM206 189h7v4h-7zM221 189h4v4h-4zM232 189h4v4h-4zM240 189h3v4h-3zM247 189h4v4h-4zM266 189h4v4h-4zM277 189h4v4h-4zM285 189h4v4h-4zM293 189h3v4h-3zM308 189h7v4h-7zM323 189h7v4h-7zM349 189h4v4h-4zM364 189h4v4h-4zM372 189h4v4h-4zM55 193h4v3h-4zM62 193h4v3h-4zM89 193h4v3h-4zM108 193h3v3h-3zM145 193h4v3h-4zM153 193h4v3h-4zM160 193h4v3h-4zM179 193h4v3h-4zM198 193h8v3h-8zM210 193h3v3h-3zM300 193h4v3h-4zM315 193h4v3h-4zM323 193h7v3h-7zM345 193h4v3h-4zM376 193h3v3h-3zM51 196h4v4h-4zM59 196h7v4h-7zM74 196h3v4h-3zM93 196h7v4h-7zM104 196h4v4h-4zM115 196h8v4h-8zM134 196h4v4h-4zM145 196h4v4h-4zM183 196h11v4h-11zM210 196h3v4h-3zM243 196h4v4h-4zM259 196h3v4h-3zM315 196h11v4h-11zM334 196h4v4h-4zM342 196h3v4h-3zM349 196h4v4h-4zM360 196h4v4h-4zM62 200h4v4h-4zM74 200h7v4h-7zM85 200h8v4h-8zM96 200h8v4h-8zM108 200h3v4h-3zM130 200h4v4h-4zM145 200h4v4h-4zM153 200h7v4h-7zM168 200h4v4h-4zM176 200h3v4h-3zM228 200h4v4h-4zM255 200h4v4h-4zM266 200h4v4h-4zM274 200h3v4h-3zM296 200h4v4h-4zM308 200h3v4h-3zM323 200h3v4h-3zM330 200h4v4h-4zM342 200h3v4h-3zM349 200h4v4h-4zM357 200h3v4h-3zM364 200h8v4h-8zM51 204h15v4h-15zM70 204h7v4h-7zM81 204h4v4h-4zM89 204h4v4h-4zM96 204h12v4h-12zM111 204h4v4h-4zM119 204h8v4h-8zM145 204h15v4h-15zM164 204h4v4h-4zM172 204h4v4h-4zM191 204h19v4h-19zM217 204h4v4h-4zM240 204h3v4h-3zM266 204h4v4h-4zM285 204h4v4h-4zM293 204h7v4h-7zM304 204h7v4h-7zM326 204h16v4h-16zM349 204h15v4h-15zM379 204h4v4h-4zM70 208h4v3h-4zM85 208h4v3h-4zM96 208h4v3h-4zM111 208h4v3h-4zM119 208h8v3h-8zM168 208h4v3h-4zM194 208h19v3h-19zM217 208h4v3h-4zM236 208h4v3h-4zM262 208h4v3h-4zM274 208h7v3h-7zM300 208h4v3h-4zM315 208h4v3h-4zM338 208h7v3h-7zM349 208h4v3h-4zM364 208h8v3h-8zM81 211h4v4h-4zM100 211h8v4h-8zM111 211h4v4h-4zM127 211h15v4h-15zM168 211h4v4h-4zM187 211h4v4h-4zM198 211h4v4h-4zM210 211h3v4h-3zM228 211h4v4h-4zM266 211h4v4h-4zM285 211h4v4h-4zM334 211h4v4h-4zM342 211h7v4h-7zM368 211h4v4h-4zM59 215h3v4h-3zM93 215h11v4h-11zM111 215h4v4h-4zM119 215h4v4h-4zM138 215h4v4h-4zM160 215h4v4h-4zM176 215h3v4h-3zM187 215h4v4h-4zM194 215h4v4h-4zM206 215h4v4h-4zM213 215h8v4h-8zM232 215h4v4h-4zM255 215h4v4h-4zM274 215h3v4h-3zM349 215h4v4h-4zM357 215h3v4h-3zM66 219h4v4h-4zM77 219h4v4h-4zM96 219h4v4h-4zM111 219h12v4h-12zM127 219h3v4h-3zM134 219h8v4h-8zM164 219h4v4h-4zM183 219h4v4h-4zM206 219h4v4h-4zM217 219h4v4h-4zM228 219h4v4h-4zM251 219h4v4h-4zM266 219h4v4h-4zM277 219h8v4h-8zM296 219h4v4h-4zM311 219h4v4h-4zM323 219h7v4h-7zM338 219h4v4h-4zM349 219h8v4h-8zM360 219h8v4h-8zM372 219h11v4h-11zM62 223h4v3h-4zM70 223h4v3h-4zM93 223h3v3h-3zM115 223h4v3h-4zM134 223h8v3h-8zM160 223h4v3h-4zM187 223h4v3h-4zM194 223h8v3h-8zM213 223h4v3h-4zM243 223h4v3h-4zM255 223h4v3h-4zM304 223h4v3h-4zM315 223h4v3h-4zM326 223h4v3h-4zM353 223h4v3h-4zM360 223h4v3h-4zM372 223h4v3h-4zM62 226h4v4h-4zM89 226h7v4h-7zM127 226h3v4h-3zM149 226h4v4h-4zM157 226h3v4h-3zM164 226h4v4h-4zM176 226h3v4h-3zM191 226h3v4h-3zM198 226h4v4h-4zM266 226h4v4h-4zM289 226h4v4h-4zM345 226h4v4h-4zM364 226h8v4h-8zM59 230h3v4h-3zM66 230h4v4h-4zM85 230h4v4h-4zM111 230h4v4h-4zM138 230h4v4h-4zM153 230h4v4h-4zM160 230h4v4h-4zM172 230h7v4h-7zM198 230h4v4h-4zM213 230h4v4h-4zM232 230h8v4h-8zM262 230h4v4h-4zM277 230h8v4h-8zM323 230h3v4h-3zM353 230h11v4h-11zM368 230h4v4h-4zM376 230h7v4h-7zM93 234h3v4h-3zM100 234h8v4h-8zM111 234h4v4h-4zM119 234h4v4h-4zM134 234h4v4h-4zM142 234h7v4h-7zM179 234h12v4h-12zM198 234h12v4h-12zM217 234h4v4h-4zM228 234h4v4h-4zM240 234h3v4h-3zM247 234h4v4h-4zM311 234h8v4h-8zM323 234h3v4h-3zM334 234h4v4h-4zM345 234h4v4h-4zM55 238h7v4h-7zM66 238h4v4h-4zM89 238h4v4h-4zM115 238h4v4h-4zM138 238h4v4h-4zM164 238h4v4h-4zM183 238h4v4h-4zM191 238h3v4h-3zM202 238h4v4h-4zM217 238h4v4h-4zM228 238h4v4h-4zM243 238h4v4h-4zM251 238h4v4h-4zM266 238h4v4h-4zM274 238h3v4h-3zM285 238h4v4h-4zM315 238h4v4h-4zM323 238h3v4h-3zM345 238h4v4h-4zM353 238h4v4h-4zM368 238h4v4h-4zM376 238h3v4h-3zM51 242h19v3h-19zM81 242h4v3h-4zM96 242h4v3h-4zM104 242h4v3h-4zM111 242h4v3h-4zM134 242h4v3h-4zM149 242h4v3h-4zM160 242h8v3h-8zM187 242h11v3h-11zM202 242h8v3h-8zM213 242h4v3h-4zM221 242h7v3h-7zM236 242h4v3h-4zM262 242h4v3h-4zM270 242h11v3h-11zM285 242h4v3h-4zM293 242h3v3h-3zM304 242h4v3h-4zM311 242h8v3h-8zM323 242h7v3h-7zM349 242h8v3h-8zM360 242h8v3h-8zM372 242h4v3h-4zM74 245h3v4h-3zM100 245h8v4h-8zM111 245h4v4h-4zM123 245h7v4h-7zM168 245h4v4h-4zM202 245h4v4h-4zM210 245h7v4h-7zM221 245h4v4h-4zM228 245h4v4h-4zM247 245h4v4h-4zM274 245h3v4h-3zM281 245h4v4h-4zM289 245h4v4h-4zM345 245h12v4h-12zM368 245h8v4h-8zM51 249h4v4h-4zM59 249h3v4h-3zM70 249h4v4h-4zM93 249h7v4h-7zM104 249h4v4h-4zM115 249h4v4h-4zM130 249h4v4h-4zM153 249h4v4h-4zM168 249h8v4h-8zM191 249h3v4h-3zM202 249h8v4h-8zM217 249h4v4h-4zM232 249h8v4h-8zM274 249h3v4h-3zM289 249h4v4h-4zM304 249h4v4h-4zM323 249h30v4h-30zM360 249h4v4h-4zM55 253h15v4h-15zM74 253h7v4h-7zM89 253h7v4h-7zM100 253h4v4h-4zM108 253h3v4h-3zM130 253h4v4h-4zM145 253h8v4h-8zM157 253h3v4h-3zM168 253h4v4h-4zM176 253h3v4h-3zM213 253h4v4h-4zM232 253h4v4h-4zM247 253h12v4h-12zM266 253h4v4h-4zM277 253h8v4h-8zM293 253h3v4h-3zM304 253h4v4h-4zM311 253h4v4h-4zM323 253h3v4h-3zM334 253h4v4h-4zM349 253h8v4h-8zM368 253h4v4h-4zM376 253h3v4h-3zM51 257h4v3h-4zM81 257h8v3h-8zM96 257h4v3h-4zM104 257h4v3h-4zM130 257h4v3h-4zM138 257h4v3h-4zM160 257h4v3h-4zM172 257h7v3h-7zM183 257h4v3h-4zM194 257h4v3h-4zM210 257h3v3h-3zM236 257h7v3h-7zM255 257h4v3h-4zM274 257h3v3h-3zM304 257h4v3h-4zM319 257h4v3h-4zM360 257h4v3h-4zM376 257h3v3h-3zM62 260h4v4h-4zM77 260h4v4h-4zM104 260h4v4h-4zM138 260h7v4h-7zM149 260h4v4h-4zM157 260h3v4h-3zM176 260h3v4h-3zM191 260h3v4h-3zM206 260h4v4h-4zM213 260h4v4h-4zM232 260h11v4h-11zM289 260h4v4h-4zM304 260h4v4h-4zM357 260h3v4h-3zM368 260h8v4h-8zM55 264h4v4h-4zM74 264h3v4h-3zM81 264h4v4h-4zM111 264h4v4h-4zM127 264h3v4h-3zM138 264h11v4h-11zM157 264h15v4h-15zM206 264h4v4h-4zM217 264h4v4h-4zM236 264h4v4h-4zM247 264h4v4h-4zM304 264h4v4h-4zM323 264h7v4h-7zM338 264h4v4h-4zM349 264h4v4h-4zM360 264h4v4h-4zM376 264h3v4h-3zM59 268h3v4h-3zM66 268h8v4h-8zM96 268h12v4h-12zM127 268h3v4h-3zM138 268h7v4h-7zM168 268h19v4h-19zM217 268h8v4h-8zM232 268h4v4h-4zM247 268h4v4h-4zM266 268h8v4h-8zM277 268h8v4h-8zM319 268h4v4h-4zM326 268h4v4h-4zM334 268h4v4h-4zM353 268h4v4h-4zM55 272h4v4h-4zM66 272h4v4h-4zM74 272h3v4h-3zM85 272h8v4h-8zM100 272h8v4h-8zM119 272h8v4h-8zM138 272h7v4h-7zM149 272h8v4h-8zM168 272h4v4h-4zM176 272h3v4h-3zM183 272h4v4h-4zM194 272h8v4h-8zM217 272h4v4h-4zM240 272h7v4h-7zM293 272h3v4h-3zM304 272h7v4h-7zM315 272h4v4h-4zM323 272h3v4h-3zM342 272h3v4h-3zM353 272h4v4h-4zM372 272h4v4h-4zM51 276h4v3h-4zM62 276h4v3h-4zM74 276h11v3h-11zM100 276h4v3h-4zM108 276h3v3h-3zM119 276h15v3h-15zM142 276h7v3h-7zM179 276h4v3h-4zM191 276h3v3h-3zM213 276h4v3h-4zM274 276h7v3h-7zM293 276h3v3h-3zM304 276h7v3h-7zM323 276h3v3h-3zM330 276h12v3h-12zM349 276h4v3h-4zM372 276h11v3h-11zM62 279h4v4h-4zM74 279h7v4h-7zM85 279h8v4h-8zM96 279h4v4h-4zM108 279h3v4h-3zM115 279h4v4h-4zM149 279h4v4h-4zM157 279h3v4h-3zM164 279h4v4h-4zM176 279h7v4h-7zM187 279h4v4h-4zM194 279h4v4h-4zM210 279h3v4h-3zM232 279h4v4h-4zM262 279h4v4h-4zM270 279h4v4h-4zM277 279h8v4h-8zM304 279h4v4h-4zM315 279h8v4h-8zM326 279h4v4h-4zM349 279h15v4h-15zM51 283h4v4h-4zM77 283h4v4h-4zM89 283h7v4h-7zM104 283h4v4h-4zM138 283h7v4h-7zM149 283h8v4h-8zM168 283h8v4h-8zM183 283h4v4h-4zM198 283h12v4h-12zM247 283h12v4h-12zM274 283h7v4h-7zM296 283h8v4h-8zM308 283h11v4h-11zM323 283h7v4h-7zM334 283h4v4h-4zM342 283h3v4h-3zM357 283h11v4h-11zM376 283h3v4h-3zM55 287h4v4h-4zM62 287h4v4h-4zM89 287h4v4h-4zM104 287h11v4h-11zM123 287h4v4h-4zM176 287h7v4h-7zM202 287h4v4h-4zM228 287h4v4h-4zM240 287h3v4h-3zM259 287h7v4h-7zM308 287h3v4h-3zM319 287h11v4h-11zM342 287h3v4h-3zM349 287h8v4h-8zM360 287h4v4h-4zM372 287h7v4h-7zM59 291h3v3h-3zM74 291h3v3h-3zM93 291h3v3h-3zM176 291h3v3h-3zM236 291h4v3h-4zM247 291h4v3h-4zM293 291h7v3h-7zM304 291h4v3h-4zM311 291h4v3h-4zM326 291h4v3h-4zM338 291h4v3h-4zM357 291h3v3h-3zM368 291h4v3h-4zM55 294h4v4h-4zM74 294h7v4h-7zM100 294h4v4h-4zM115 294h4v4h-4zM134 294h4v4h-4zM145 294h4v4h-4zM153 294h4v4h-4zM168 294h8v4h-8zM179 294h4v4h-4zM221 294h4v4h-4zM232 294h4v4h-4zM251 294h11v4h-11zM289 294h4v4h-4zM296 294h4v4h-4zM304 294h4v4h-4zM323 294h7v4h-7zM334 294h8v4h-8zM345 294h4v4h-4zM353 294h4v4h-4zM364 294h15v4h-15zM51 298h8v4h-8zM100 298h4v4h-4zM111 298h4v4h-4zM123 298h4v4h-4zM149 298h4v4h-4zM164 298h4v4h-4zM183 298h8v4h-8zM194 298h4v4h-4zM202 298h4v4h-4zM213 298h4v4h-4zM228 298h4v4h-4zM247 298h12v4h-12zM281 298h4v4h-4zM311 298h4v4h-4zM323 298h3v4h-3zM368 298h4v4h-4zM70 302h4v4h-4zM77 302h4v4h-4zM93 302h3v4h-3zM142 302h3v4h-3zM164 302h4v4h-4zM176 302h3v4h-3zM183 302h4v4h-4zM191 302h11v4h-11zM225 302h3v4h-3zM243 302h4v4h-4zM251 302h4v4h-4zM266 302h11v4h-11zM281 302h4v4h-4zM304 302h4v4h-4zM342 302h7v4h-7zM55 306h11v3h-11zM74 306h3v3h-3zM81 306h4v3h-4zM96 306h4v3h-4zM108 306h7v3h-7zM123 306h4v3h-4zM138 306h4v3h-4zM168 306h4v3h-4zM191 306h7v3h-7zM206 306h4v3h-4zM221 306h4v3h-4zM277 306h4v3h-4zM300 306h8v3h-8zM323 306h7v3h-7zM353 306h4v3h-4zM372 306h7v3h-7zM51 309h4v4h-4zM85 309h8v4h-8zM130 309h4v4h-4zM157 309h3v4h-3zM172 309h4v4h-4zM206 309h4v4h-4zM236 309h4v4h-4zM281 309h4v4h-4zM304 309h4v4h-4zM338 309h4v4h-4zM349 309h8v4h-8zM372 309h11v4h-11zM62 313h4v4h-4zM104 313h4v4h-4zM123 313h4v4h-4zM168 313h4v4h-4zM179 313h4v4h-4zM187 313h4v4h-4zM198 313h8v4h-8zM217 313h4v4h-4zM225 313h3v4h-3zM232 313h4v4h-4zM262 313h4v4h-4zM274 313h3v4h-3zM296 313h4v4h-4zM308 313h3v4h-3zM323 313h3v4h-3zM342 313h3v4h-3zM360 313h4v4h-4zM368 313h8v4h-8zM51 317h4v4h-4zM81 317h4v4h-4zM153 317h4v4h-4zM172 317h4v4h-4zM187 317h4v4h-4zM217 317h4v4h-4zM228 317h12v4h-12zM266 317h15v4h-15zM338 317h7v4h-7zM353 317h4v4h-4zM59 321h11v4h-11zM96 321h12v4h-12zM119 321h4v4h-4zM134 321h4v4h-4zM149 321h4v4h-4zM157 321h3v4h-3zM187 321h7v4h-7zM217 321h4v4h-4zM228 321h8v4h-8zM262 321h4v4h-4zM277 321h4v4h-4zM368 321h4v4h-4zM376 321h7v4h-7zM55 325h7v3h-7zM108 325h3v3h-3zM115 325h4v3h-4zM130 325h4v3h-4zM221 325h4v3h-4zM228 325h4v3h-4zM262 325h4v3h-4zM277 325h4v3h-4zM293 325h3v3h-3zM342 325h7v3h-7zM353 325h4v3h-4zM372 325h4v3h-4zM59 328h11v4h-11zM93 328h3v4h-3zM115 328h4v4h-4zM142 328h3v4h-3zM164 328h4v4h-4zM176 328h3v4h-3zM213 328h4v4h-4zM221 328h4v4h-4zM247 328h4v4h-4zM255 328h7v4h-7zM281 328h4v4h-4zM289 328h4v4h-4zM296 328h4v4h-4zM319 328h7v4h-7zM334 328h4v4h-4zM368 328h4v4h-4zM376 328h3v4h-3zM77 332h4v4h-4zM89 332h7v4h-7zM104 332h4v4h-4zM111 332h8v4h-8zM123 332h4v4h-4zM134 332h8v4h-8zM145 332h4v4h-4zM153 332h4v4h-4zM160 332h4v4h-4zM172 332h4v4h-4zM187 332h4v4h-4zM202 332h4v4h-4zM236 332h4v4h-4zM251 332h4v4h-4zM277 332h4v4h-4zM293 332h3v4h-3zM323 332h7v4h-7zM360 332h4v4h-4zM376 332h3v4h-3zM51 336h4v4h-4zM89 336h4v4h-4zM96 336h4v4h-4zM111 336h4v4h-4zM176 336h3v4h-3zM202 336h4v4h-4zM213 336h4v4h-4zM236 336h4v4h-4zM251 336h4v4h-4zM277 336h4v4h-4zM296 336h8v4h-8zM323 336h11v4h-11zM345 336h4v4h-4zM360 336h4v4h-4zM368 336h4v4h-4zM376 336h7v4h-7zM51 340h4v3h-4zM66 340h4v3h-4zM77 340h4v3h-4zM85 340h4v3h-4zM96 340h4v3h-4zM108 340h3v3h-3zM134 340h4v3h-4zM142 340h3v3h-3zM149 340h4v3h-4zM172 340h15v3h-15zM191 340h3v3h-3zM210 340h3v3h-3zM217 340h4v3h-4zM236 340h4v3h-4zM247 340h8v3h-8zM277 340h8v3h-8zM296 340h12v3h-12zM315 340h4v3h-4zM323 340h7v3h-7zM334 340h4v3h-4zM349 340h8v3h-8zM368 340h4v3h-4zM51 343h4v4h-4zM62 343h4v4h-4zM77 343h19v4h-19zM100 343h4v4h-4zM119 343h8v4h-8zM142 343h3v4h-3zM153 343h4v4h-4zM164 343h4v4h-4zM176 343h3v4h-3zM187 343h4v4h-4zM202 343h4v4h-4zM210 343h11v4h-11zM240 343h3v4h-3zM251 343h11v4h-11zM266 343h11v4h-11zM289 343h7v4h-7zM311 343h4v4h-4zM326 343h4v4h-4zM360 343h4v4h-4zM55 347h19v4h-19zM77 347h4v4h-4zM153 347h4v4h-4zM164 347h4v4h-4zM179 347h4v4h-4zM187 347h4v4h-4zM202 347h4v4h-4zM213 347h4v4h-4zM232 347h8v4h-8zM243 347h4v4h-4zM262 347h4v4h-4zM274 347h3v4h-3zM285 347h4v4h-4zM323 347h3v4h-3zM70 351h4v4h-4zM81 351h4v4h-4zM89 351h4v4h-4zM123 351h4v4h-4zM138 351h4v4h-4zM145 351h4v4h-4zM172 351h7v4h-7zM281 351h4v4h-4zM308 351h3v4h-3zM319 351h4v4h-4zM349 351h11v4h-11zM93 355h7v4h-7zM104 355h4v4h-4zM111 355h4v4h-4zM160 355h4v4h-4zM179 355h8v4h-8zM194 355h4v4h-4zM228 355h4v4h-4zM262 355h4v4h-4zM277 355h4v4h-4zM349 355h8v4h-8zM379 355h4v4h-4zM66 359h4v3h-4zM74 359h11v3h-11zM93 359h7v3h-7zM104 359h4v3h-4zM111 359h4v3h-4zM123 359h4v3h-4zM138 359h4v3h-4zM176 359h3v3h-3zM187 359h4v3h-4zM206 359h7v3h-7zM225 359h3v3h-3zM259 359h3v3h-3zM266 359h4v3h-4zM277 359h4v3h-4zM300 359h8v3h-8zM364 359h8v3h-8zM51 362h4v4h-4zM85 362h4v4h-4zM104 362h4v4h-4zM134 362h8v4h-8zM153 362h4v4h-4zM217 362h4v4h-4zM225 362h7v4h-7zM247 362h4v4h-4zM262 362h4v4h-4zM270 362h7v4h-7zM304 362h4v4h-4zM323 362h3v4h-3zM62 366h4v4h-4zM96 366h4v4h-4zM108 366h7v4h-7zM127 366h3v4h-3zM142 366h3v4h-3zM217 366h4v4h-4zM240 366h3v4h-3zM270 366h7v4h-7zM293 366h3v4h-3zM323 366h3v4h-3zM360 366h8v4h-8zM51 370h8v4h-8zM85 370h4v4h-4zM96 370h23v4h-23zM138 370h4v4h-4zM157 370h3v4h-3zM176 370h3v4h-3zM183 370h19v4h-19zM206 370h11v4h-11zM225 370h7v4h-7zM236 370h11v4h-11zM274 370h3v4h-3zM293 370h7v4h-7zM308 370h7v4h-7zM319 370h4v4h-4zM342 370h3v4h-3zM353 370h4v4h-4zM364 370h8v4h-8zM55 374h4v3h-4zM62 374h4v3h-4zM81 374h4v3h-4zM93 374h3v3h-3zM123 374h4v3h-4zM134 374h8v3h-8zM206 374h7v3h-7zM217 374h8v3h-8zM247 374h4v3h-4zM285 374h4v3h-4zM304 374h4v3h-4zM345 374h4v3h-4zM353 374h4v3h-4zM372 374h7v3h-7zM123 377h4v4h-4zM153 377h4v4h-4zM168 377h4v4h-4zM176 377h3v4h-3zM187 377h4v4h-4zM217 377h4v4h-4zM225 377h3v4h-3zM232 377h4v4h-4zM277 377h4v4h-4zM304 377h4v4h-4zM323 377h3v4h-3zM342 377h3v4h-3zM349 377h11v4h-11zM376 377h7v4h-7zM55 381h7v4h-7zM66 381h4v4h-4zM93 381h3v4h-3zM108 381h3v4h-3zM127 381h7v4h-7zM142 381h3v4h-3zM157 381h3v4h-3zM168 381h11v4h-11zM206 381h4v4h-4zM213 381h8v4h-8zM274 381h3v4h-3zM323 381h3v4h-3zM353 381h4v4h-4zM372 381h11v4h-11zM62 385h4v4h-4zM89 385h4v4h-4zM100 385h4v4h-4zM119 385h4v4h-4zM130 385h4v4h-4zM191 385h3v4h-3zM202 385h4v4h-4zM213 385h4v4h-4zM221 385h4v4h-4zM262 385h4v4h-4zM285 385h4v4h-4zM304 385h4v4h-4zM323 385h3v4h-3zM360 385h4v4h-4zM55 389h4v3h-4zM74 389h3v3h-3zM96 389h4v3h-4zM104 389h4v3h-4zM111 389h4v3h-4zM123 389h15v3h-15zM153 389h4v3h-4zM164 389h15v3h-15zM183 389h8v3h-8zM198 389h4v3h-4zM206 389h7v3h-7zM217 389h8v3h-8zM228 389h8v3h-8zM240 389h3v3h-3zM247 389h4v3h-4zM262 389h15v3h-15zM281 389h4v3h-4zM296 389h8v3h-8zM311 389h12v3h-12zM345 389h4v3h-4zM357 389h3v3h-3zM364 389h8v3h-8zM55 392h4v4h-4zM62 392h4v4h-4zM81 392h4v4h-4zM89 392h11v4h-11zM104 392h4v4h-4zM119 392h11v4h-11zM138 392h4v4h-4zM153 392h7v4h-7zM176 392h3v4h-3zM183 392h4v4h-4zM198 392h8v4h-8zM213 392h19v4h-19zM240 392h3v4h-3zM266 392h15v4h-15zM357 392h7v4h-7zM368 392h4v4h-4zM379 392h4v4h-4zM62 396h4v4h-4zM119 396h4v4h-4zM134 396h8v4h-8zM183 396h4v4h-4zM210 396h3v4h-3zM270 396h4v4h-4zM353 396h4v4h-4zM360 396h4v4h-4zM368 396h4v4h-4zM376 396h3v4h-3zM51 400h4v4h-4zM66 400h4v4h-4zM100 400h4v4h-4zM119 400h4v4h-4zM130 400h4v4h-4zM138 400h4v4h-4zM145 400h4v4h-4zM168 400h4v4h-4zM183 400h8v4h-8zM202 400h4v4h-4zM210 400h3v4h-3zM217 400h4v4h-4zM228 400h4v4h-4zM262 400h4v4h-4zM274 400h3v4h-3zM372 400h4v4h-4zM51 404h4v4h-4zM59 404h7v4h-7zM70 404h7v4h-7zM81 404h8v4h-8zM96 404h4v4h-4zM115 404h4v4h-4zM138 404h7v4h-7zM153 404h4v4h-4zM183 404h4v4h-4zM198 404h4v4h-4zM210 404h3v4h-3zM225 404h7v4h-7zM243 404h4v4h-4zM251 404h4v4h-4zM360 404h4v4h-4zM372 404h4v4h-4zM55 408h4v3h-4zM74 408h3v3h-3zM81 408h4v3h-4zM108 408h3v3h-3zM130 408h8v3h-8zM142 408h7v3h-7zM183 408h4v3h-4zM206 408h4v3h-4zM217 408h8v3h-8zM236 408h4v3h-4zM247 408h8v3h-8zM259 408h3v3h-3zM304 408h4v3h-4zM311 408h4v3h-4zM353 408h4v3h-4zM376 408h3v3h-3zM77 411h4v4h-4zM93 411h3v4h-3zM119 411h4v4h-4zM127 411h3v4h-3zM145 411h4v4h-4zM160 411h4v4h-4zM168 411h8v4h-8zM179 411h8v4h-8zM228 411h4v4h-4zM236 411h4v4h-4zM259 411h3v4h-3zM270 411h4v4h-4zM308 411h3v4h-3zM323 411h3v4h-3zM364 411h8v4h-8zM379 411h4v4h-4zM59 415h11v4h-11zM81 415h4v4h-4zM96 415h12v4h-12zM123 415h4v4h-4zM130 415h15v4h-15zM149 415h8v4h-8zM176 415h15v4h-15zM198 415h4v4h-4zM210 415h7v4h-7zM221 415h4v4h-4zM243 415h4v4h-4zM274 415h3v4h-3zM285 415h8v4h-8zM311 415h4v4h-4zM357 415h3v4h-3zM51 419h4v4h-4zM66 419h4v4h-4zM74 419h3v4h-3zM81 419h4v4h-4zM89 419h4v4h-4zM115 419h8v4h-8zM138 419h4v4h-4zM153 419h7v4h-7zM164 419h4v4h-4zM172 419h11v4h-11zM187 419h4v4h-4zM202 419h8v4h-8zM213 419h4v4h-4zM221 419h4v4h-4zM228 419h4v4h-4zM240 419h7v4h-7zM251 419h4v4h-4zM259 419h3v4h-3zM274 419h3v4h-3zM285 419h8v4h-8zM304 419h15v4h-15zM330 419h4v4h-4zM342 419h3v4h-3zM364 419h4v4h-4zM62 423h8v3h-8zM134 423h8v3h-8zM149 423h4v3h-4zM164 423h4v3h-4zM194 423h4v3h-4zM213 423h8v3h-8zM225 423h3v3h-3zM285 423h4v3h-4zM311 423h4v3h-4zM323 423h7v3h-7zM349 423h4v3h-4zM364 423h15v3h-15zM62 426h12v4h-12zM96 426h4v4h-4zM108 426h3v4h-3zM130 426h4v4h-4zM138 426h4v4h-4zM153 426h7v4h-7zM164 426h4v4h-4zM176 426h3v4h-3zM183 426h4v4h-4zM191 426h3v4h-3zM198 426h4v4h-4zM213 426h12v4h-12zM247 426h4v4h-4zM266 426h8v4h-8zM277 426h4v4h-4zM300 426h4v4h-4zM319 426h4v4h-4zM326 426h8v4h-8zM338 426h4v4h-4zM66 430h8v4h-8zM123 430h4v4h-4zM134 430h4v4h-4zM142 430h3v4h-3zM153 430h4v4h-4zM160 430h4v4h-4zM176 430h3v4h-3zM217 430h4v4h-4zM228 430h4v4h-4zM293 430h3v4h-3zM300 430h8v4h-8zM323 430h3v4h-3zM345 430h4v4h-4zM353 430h7v4h-7zM51 434h11v4h-11zM66 434h8v4h-8zM81 434h4v4h-4zM89 434h7v4h-7zM104 434h4v4h-4zM111 434h4v4h-4zM134 434h4v4h-4zM142 434h7v4h-7zM160 434h8v4h-8zM172 434h4v4h-4zM179 434h4v4h-4zM187 434h4v4h-4zM194 434h4v4h-4zM225 434h11v4h-11zM247 434h4v4h-4zM255 434h4v4h-4zM262 434h4v4h-4zM270 434h7v4h-7zM293 434h3v4h-3zM304 434h4v4h-4zM323 434h11v4h-11zM345 434h4v4h-4zM357 434h3v4h-3zM376 434h3v4h-3zM74 438h3v4h-3zM85 438h4v4h-4zM100 438h4v4h-4zM108 438h3v4h-3zM119 438h8v4h-8zM153 438h7v4h-7zM176 438h7v4h-7zM194 438h4v4h-4zM206 438h7v4h-7zM221 438h4v4h-4zM228 438h4v4h-4zM240 438h11v4h-11zM259 438h3v4h-3zM308 438h3v4h-3zM315 438h4v4h-4zM334 438h8v4h-8zM357 438h3v4h-3zM376 438h7v4h-7zM59 442h7v3h-7zM74 442h3v3h-3zM104 442h4v3h-4zM119 442h4v3h-4zM127 442h3v3h-3zM153 442h4v3h-4zM164 442h4v3h-4zM172 442h4v3h-4zM187 442h7v3h-7zM198 442h4v3h-4zM210 442h3v3h-3zM217 442h8v3h-8zM228 442h4v3h-4zM240 442h7v3h-7zM255 442h4v3h-4zM262 442h12v3h-12zM308 442h11v3h-11zM330 442h4v3h-4zM342 442h3v3h-3zM357 442h3v3h-3zM368 442h8v3h-8zM51 445h8v4h-8zM70 445h4v4h-4zM96 445h4v4h-4zM108 445h3v4h-3zM138 445h4v4h-4zM153 445h4v4h-4zM164 445h4v4h-4zM210 445h3v4h-3zM243 445h4v4h-4zM255 445h4v4h-4zM270 445h4v4h-4zM289 445h4v4h-4zM311 445h8v4h-8zM326 445h4v4h-4zM345 445h4v4h-4zM372 445h4v4h-4z"/><path fill="#ffffff" d="M51 117h4v4h-4zM55 121h4v4h-4zM59 125h3v3h-3zM62 128h4v4h-4zM66 132h4v4h-4zM70 136h4v4h-4zM74 140h3v3h-3zM77 143h4v4h-4zM81 147h4v4h-4zM85 151h4v4h-4zM89 155h4v4h-4zM93 159h3v3h-3zM96 162h4v4h-4zM100 166h4v4h-4zM104 170h4v4h-4zM108 174h3v3h-3zM111 177h4v4h-4zM115 181h4v4h-4zM119 185h4v4h-4zM123 189h4v4h-4zM127 193h3v3h-3zM130 196h4v4h-4zM134 200h4v4h-4zM138 204h4v4h-4zM142 208h3v3h-3zM145 211h4v4h-4zM149 215h4v4h-4zM153 219h4v4h-4zM157 223h3v3h-3zM160 226h4v4h-4zM164 230h4v4h-4zM168 234h4v4h-4zM172 238h4v4h-4zM176 242h3v3h-3zM179 245h4v4h-4zM183 249h4v4h-4zM187 253h4v4h-4zM191 257h3v3h-3zM194 260h4v4h-4zM198 264h4v4h-4zM202 268h4v4h-4zM206 272h4v4h-4zM210 276h3v3h-3zM213 279h4v4h-4zM217 283h4v4h-4zM221 287h4v4h-4zM225 291h3v3h-3zM228 294h4v4h-4zM232 298h4v4h-4zM236 302h4v4h-4zM240 306h3v3h-3zM243 309h4v4h-4zM247 313h4v4h-4zM251 317h4v4h-4zM255 321h4v4h-4zM259 325h3v3h-3zM262 328h4v4h-4zM266 332h4v4h-4zM270 336h4v4h-4zM274 340h3v3h-3zM277 343h4v4h-4zM281 347h4v4h-4zM285 351h4v4h-4zM289 355h4v4h-4zM293 359h3v3h-3zM296 362h4v4h-4zM300 366h4v4h-4zM304 370h4v4h-4zM308 374h3v3h-3zM311 377h4v4h-4zM315 381h4v4h-4zM319 385h4v4h-4zM323 389h3v3h-3zM326 392h4v4h-4zM330 396h4v4h-4zM334 400h4v4h-4zM338 404h4v4h-4zM342 408h3v3h-3zM345 411h4v4h-4zM349 415h4v4h-4zM353 419h4v4h-4zM357 423h3v3h-3zM360 426h4v4h-4zM364 430h4v4h-4zM368 434h4v4h-4zM372 438h4v4h-4zM376 442h3v3h-3zM379 445h4v4h-4z"/>
<text x="584" y="77" font-size="16" text-anchor="middle" fill="#000" font-weight="bold" letter-spacing="0.25">Red pair % histogram</text>
<text x="581" y="98" font-size="16" text-anchor="middle" fill="#000" font-weight="bold" letter-spacing="0.33">(Lines represent average, ±1</text>
<text x="583" y="119" font-size="16" text-anchor="middle" fill="#000" font-weight="bold" >SD)</text>
<text transform="translate(423,262) rotate(-90)" font-size="14.5" font-weight="bold" text-anchor="middle" fill="#000">Red %</text>
<rect x="454" y="134" width="1" height="254" fill="#000"/>
<rect x="446" y="387" width="8" height="1" fill="#000"/>
<text x="442.5" y="390.8" font-size="12" text-anchor="end" fill="#000" font-weight="normal" >0</text>
<rect x="450" y="379" width="4" height="1" fill="#000"/>
<rect x="450" y="371" width="4" height="1" fill="#000"/>
<rect x="450" y="363" width="4" height="1" fill="#000"/>
<rect x="450" y="356" width="4" height="1" fill="#000"/>
<rect x="446" y="348" width="8" height="1" fill="#000"/>
<text x="442.5" y="351.8" font-size="12" text-anchor="end" fill="#000" font-weight="normal" >10</text>
<rect x="450" y="340" width="4" height="1" fill="#000"/>
<rect x="450" y="333" width="4" height="1" fill="#000"/>
<rect x="450" y="325" width="4" height="1" fill="#000"/>
<rect x="450" y="317" width="4" height="1" fill="#000"/>
<rect x="446" y="310" width="8" height="1" fill="#000"/>
<text x="442.5" y="313.8" font-size="12" text-anchor="end" fill="#000" font-weight="normal" >20</text>
<rect x="450" y="302" width="4" height="1" fill="#000"/>
<rect x="450" y="294" width="4" height="1" fill="#000"/>
<rect x="450" y="286" width="4" height="1" fill="#000"/>
<rect x="450" y="279" width="4" height="1" fill="#000"/>
<rect x="446" y="271" width="8" height="1" fill="#000"/>
<text x="442.5" y="274.8" font-size="12" text-anchor="end" fill="#000" font-weight="normal" >30</text>
<rect x="450" y="263" width="4" height="1" fill="#000"/>
<rect x="450" y="256" width="4" height="1" fill="#000"/>
<rect x="450" y="248" width="4" height="1" fill="#000"/>
<rect x="450" y="240" width="4" height="1" fill="#000"/>
<rect x="446" y="232" width="8" height="1" fill="#000"/>
<text x="442.5" y="235.8" font-size="12" text-anchor="end" fill="#000" font-weight="normal" >40</text>
<rect x="450" y="225" width="4" height="1" fill="#000"/>
<rect x="450" y="217" width="4" height="1" fill="#000"/>
<rect x="450" y="209" width="4" height="1" fill="#000"/>
<rect x="450" y="202" width="4" height="1" fill="#000"/>
<rect x="446" y="194" width="8" height="1" fill="#000"/>
<text x="442.5" y="197.8" font-size="12" text-anchor="end" fill="#000" font-weight="normal" >50</text>
<rect x="450" y="186" width="4" height="1" fill="#000"/>
<rect x="450" y="178" width="4" height="1" fill="#000"/>
<rect x="450" y="171" width="4" height="1" fill="#000"/>
<rect x="450" y="163" width="4" height="1" fill="#000"/>
<rect x="446" y="155" width="8" height="1" fill="#000"/>
<text x="442.5" y="158.8" font-size="12" text-anchor="end" fill="#000" font-weight="normal" >60</text>
<rect x="450" y="148" width="4" height="1" fill="#000"/>
<rect x="450" y="140" width="4" height="1" fill="#000"/>
<rect x="450" y="132" width="4" height="1" fill="#000"/>
<rect x="457" y="128" width="253" height="267" fill="#fff"/>
<rect x="459" y="130" width="249" height="263" fill="#000"/>
<g clip-path="url(#c1)">
<line x1="459" x2="708" y1="387.5" y2="387.5" stroke="#ffffff" stroke-dasharray="3 3"/>
<line x1="459" x2="708" y1="379.5" y2="379.5" stroke="#a8a8a8" stroke-dasharray="3 3"/>
<line x1="459" x2="708" y1="371.5" y2="371.5" stroke="#a8a8a8" stroke-dasharray="3 3"/>
<line x1="459" x2="708" y1="363.5" y2="363.5" stroke="#a8a8a8" stroke-dasharray="3 3"/>
<line x1="459" x2="708" y1="356.5" y2="356.5" stroke="#a8a8a8" stroke-dasharray="3 3"/>
<line x1="459" x2="708" y1="348.5" y2="348.5" stroke="#ffffff" stroke-dasharray="3 3"/>
<line x1="459" x2="708" y1="340.5" y2="340.5" stroke="#a8a8a8" stroke-dasharray="3 3"/>
<line x1="459" x2="708" y1="333.5" y2="333.5" stroke="#a8a8a8" stroke-dasharray="3 3"/>
<line x1="459" x2="708" y1="325.5" y2="325.5" stroke="#a8a8a8" stroke-dasharray="3 3"/>
<line x1="459" x2="708" y1="317.5" y2="317.5" stroke="#a8a8a8" stroke-dasharray="3 3"/>
<line x1="459" x2="708" y1="310.5" y2="310.5" stroke="#ffffff" stroke-dasharray="3 3"/>
<line x1="459" x2="708" y1="302.5" y2="302.5" stroke="#a8a8a8" stroke-dasharray="3 3"/>
<line x1="459" x2="708" y1="294.5" y2="294.5" stroke="#a8a8a8" stroke-dasharray="3 3"/>
<line x1="459" x2="708" y1="286.5" y2="286.5" stroke="#a8a8a8" stroke-dasharray="3 3"/>
<line x1="459" x2="708" y1="279.5" y2="279.5" stroke="#a8a8a8" stroke-dasharray="3 3"/>
<line x1="459" x2="708" y1="271.5" y2="271.5" stroke="#ffffff" stroke-dasharray="3 3"/>
<line x1="459" x2="708" y1="263.5" y2="263.5" stroke="#a8a8a8" stroke-dasharray="3 3"/>
<line x1="459" x2="708" y1="256.5" y2="256.5" stroke="#a8a8a8" stroke-dasharray="3 3"/>
<line x1="459" x2="708" y1="248.5" y2="248.5" stroke="#a8a8a8" stroke-dasharray="3 3"/>
<line x1="459" x2="708" y1="240.5" y2="240.5" stroke="#a8a8a8" stroke-dasharray="3 3"/>
<line x1="459" x2="708" y1="232.5" y2="232.5" stroke="#ffffff" stroke-dasharray="3 3"/>
<line x1="459" x2="708" y1="225.5" y2="225.5" stroke="#a8a8a8" stroke-dasharray="3 3"/>
<line x1="459" x2="708" y1="217.5" y2="217.5" stroke="#a8a8a8" stroke-dasharray="3 3"/>
<line x1="459" x2="708" y1="209.5" y2="209.5" stroke="#a8a8a8" stroke-dasharray="3 3"/>
<line x1="459" x2="708" y1="202.5" y2="202.5" stroke="#a8a8a8" stroke-dasharray="3 3"/>
<line x1="459" x2="708" y1="194.5" y2="194.5" stroke="#ffffff" stroke-dasharray="3 3"/>
<line x1="459" x2="708" y1="186.5" y2="186.5" stroke="#a8a8a8" stroke-dasharray="3 3"/>
<line x1="459" x2="708" y1="178.5" y2="178.5" stroke="#a8a8a8" stroke-dasharray="3 3"/>
<line x1="459" x2="708" y1="171.5" y2="171.5" stroke="#a8a8a8" stroke-dasharray="3 3"/>
<line x1="459" x2="708" y1="163.5" y2="163.5" stroke="#a8a8a8" stroke-dasharray="3 3"/>
<line x1="459" x2="708" y1="155.5" y2="155.5" stroke="#ffffff" stroke-dasharray="3 3"/>
<line x1="459" x2="708" y1="148.5" y2="148.5" stroke="#a8a8a8" stroke-dasharray="3 3"/>
<line x1="459" x2="708" y1="140.5" y2="140.5" stroke="#a8a8a8" stroke-dasharray="3 3"/>
<line x1="459" x2="708" y1="132.5" y2="132.5" stroke="#a8a8a8" stroke-dasharray="3 3"/>
<line y1="130" y2="393" x1="463.5" x2="463.5" stroke="#ffffff" stroke-dasharray="3 3"/>
<line y1="130" y2="393" x1="476.5" x2="476.5" stroke="#a8a8a8" stroke-dasharray="3 3"/>
<line y1="130" y2="393" x1="489.5" x2="489.5" stroke="#ffffff" stroke-dasharray="3 3"/>
<line y1="130" y2="393" x1="503.5" x2="503.5" stroke="#a8a8a8" stroke-dasharray="3 3"/>
<line y1="130" y2="393" x1="516.5" x2="516.5" stroke="#ffffff" stroke-dasharray="3 3"/>
<line y1="130" y2="393" x1="530.5" x2="530.5" stroke="#a8a8a8" stroke-dasharray="3 3"/>
<line y1="130" y2="393" x1="543.5" x2="543.5" stroke="#ffffff" stroke-dasharray="3 3"/>
<line y1="130" y2="393" x1="556.5" x2="556.5" stroke="#a8a8a8" stroke-dasharray="3 3"/>
<line y1="130" y2="393" x1="570.5" x2="570.5" stroke="#ffffff" stroke-dasharray="3 3"/>
<line y1="130" y2="393" x1="583.5" x2="583.5" stroke="#a8a8a8" stroke-dasharray="3 3"/>
<line y1="130" y2="393" x1="596.5" x2="596.5" stroke="#ffffff" stroke-dasharray="3 3"/>
<line y1="130" y2="393" x1="610.5" x2="610.5" stroke="#a8a8a8" stroke-dasharray="3 3"/>
<line y1="130" y2="393" x1="623.5" x2="623.5" stroke="#ffffff" stroke-dasharray="3 3"/>
<line y1="130" y2="393" x1="636.5" x2="636.5" stroke="#a8a8a8" stroke-dasharray="3 3"/>
<line y1="130" y2="393" x1="650.5" x2="650.5" stroke="#ffffff" stroke-dasharray="3 3"/>
<line y1="130" y2="393" x1="663.5" x2="663.5" stroke="#a8a8a8" stroke-dasharray="3 3"/>
<line y1="130" y2="393" x1="676.5" x2="676.5" stroke="#ffffff" stroke-dasharray="3 3"/>
<line y1="130" y2="393" x1="690.5" x2="690.5" stroke="#a8a8a8" stroke-dasharray="3 3"/>
<path fill="#ff0000" d="M464 294H468V387H464zM468 312H469V387H468zM469 294H474V387H469zM474 258H478V387H474zM478 320H480V387H478zM480 307H482V387H480zM482 298H485V387H482zM485 236H488V387H485zM488 178H492V387H488zM492 276H493V387H492zM493 200H497V387H493zM497 280H498V387H497zM498 227H502V387H498zM502 258H505V387H502zM505 294H506V387H505zM506 272H510V387H506zM510 276H512V387H510zM512 263H516V387H512zM516 307H518V387H516zM518 312H522V387H518zM522 334H523V387H522zM523 325H525V387H523zM525 272H529V387H525zM529 298H531V387H529zM531 156H535V387H531zM535 249H537V387H535zM537 312H539V387H537zM539 183H543V387H539zM543 337H544V387H543zM544 307H547V387H544zM547 289H549V387H547zM549 280H553V387H549zM553 307H556V387H553zM556 312H558V387H556zM558 267H561V387H558zM561 337H563V387H561zM563 280H567V387H563zM567 294H568V387H567zM568 178H572V387H568zM572 258H575V387H572zM575 307H576V387H575zM576 289H579V387H576zM579 209H583V387H579zM583 320H584V387H583zM584 312H587V387H584zM587 245H591V387H587zM591 268H592V387H591zM592 227H596V387H592zM596 285H597V387H596zM597 254H600V387H597zM600 165H604V387H600zM604 307H605V387H604zM605 183H609V387H605zM609 280H611V387H609zM611 272H613V387H611zM613 209H617V387H613zM617 294H620V387H617zM620 303H621V387H620zM621 254H625V387H621zM625 263H631V387H625zM631 315H632V387H631zM632 276H635V387H632zM635 214H639V387H635zM639 245H641V387H639zM641 320H644V387H641zM644 329H646V387H644zM646 161H650V387H646zM650 276H652V387H650zM652 315H654V387H652zM654 245H658V387H654zM658 289H660V387H658zM660 294H662V387H660zM662 266H666V387H662zM666 334H667V387H666zM667 272H670V387H667zM670 192H672V387H670zM672 169H676V387H672zM676 272H678V387H676zM678 240H680V387H678zM680 218H684V387H680zM684 232H686V387H684zM686 227H690V387H686zM690 312H691V387H690zM691 200H695V387H691zM695 258H698V387H695zM698 280H700V387H698z"/>
<line x1="463" x2="708" y1="221.5" y2="221.5" stroke="#ffff00" stroke-width="2" stroke-dasharray="2 2"/>
<line x1="463" x2="708" y1="267.5" y2="267.5" stroke="#00ff00" stroke-width="2" stroke-dasharray="2 2"/>
<line x1="463" x2="708" y1="313.5" y2="313.5" stroke="#ffff00" stroke-width="2" stroke-dasharray="2 2"/>
</g>
<rect x="463" y="397" width="239" height="1" fill="#000"/>
<rect x="463" y="397" width="1" height="9" fill="#000"/>
<text x="463.5" y="418" font-size="12" text-anchor="middle" fill="#000" font-weight="normal" >0</text>
<rect x="476" y="397" width="1" height="5" fill="#000"/>
<rect x="489" y="397" width="1" height="5" fill="#000"/>
<rect x="503" y="397" width="1" height="5" fill="#000"/>
<rect x="516" y="397" width="1" height="9" fill="#000"/>
<text x="516.5" y="418" font-size="12" text-anchor="middle" fill="#000" font-weight="normal" >20</text>
<rect x="530" y="397" width="1" height="5" fill="#000"/>
<rect x="543" y="397" width="1" height="5" fill="#000"/>
<rect x="556" y="397" width="1" height="5" fill="#000"/>
<rect x="570" y="397" width="1" height="9" fill="#000"/>
<text x="570.5" y="418" font-size="12" text-anchor="middle" fill="#000" font-weight="normal" >40</text>
<rect x="583" y="397" width="1" height="5" fill="#000"/>
<rect x="596" y="397" width="1" height="5" fill="#000"/>
<rect x="610" y="397" width="1" height="5" fill="#000"/>
<rect x="623" y="397" width="1" height="9" fill="#000"/>
<text x="623.5" y="418" font-size="12" text-anchor="middle" fill="#000" font-weight="normal" >60</text>
<rect x="636" y="397" width="1" height="5" fill="#000"/>
<rect x="650" y="397" width="1" height="5" fill="#000"/>
<rect x="663" y="397" width="1" height="5" fill="#000"/>
<rect x="676" y="397" width="1" height="9" fill="#000"/>
<text x="676.5" y="418" font-size="12" text-anchor="middle" fill="#000" font-weight="normal" >80</text>
<rect x="690" y="397" width="1" height="5" fill="#000"/>
<text x="585.5" y="435.5" font-size="14" text-anchor="middle" fill="#000" font-weight="bold" >Ref.</text>
<text x="913.3" y="98" font-size="16" text-anchor="middle" fill="#000" font-weight="bold" letter-spacing="0.3">Red cluster size histogram</text>
<text transform="translate(749,250) rotate(-90)" font-size="14.5" font-weight="bold" text-anchor="middle" fill="#000">Count</text>
<rect x="787" y="112" width="1" height="276" fill="#000"/>
<rect x="779" y="387" width="8" height="1" fill="#000"/>
<text x="775.5" y="391.5" font-size="12" text-anchor="end" fill="#000" font-weight="normal" >0</text>
<rect x="783" y="376" width="4" height="1" fill="#000"/>
<rect x="783" y="366" width="4" height="1" fill="#000"/>
<rect x="783" y="356" width="4" height="1" fill="#000"/>
<rect x="783" y="346" width="4" height="1" fill="#000"/>
<rect x="779" y="336" width="8" height="1" fill="#000"/>
<text x="775.5" y="340.5" font-size="12" text-anchor="end" fill="#000" font-weight="normal" >50</text>
<rect x="783" y="326" width="4" height="1" fill="#000"/>
<rect x="783" y="315" width="4" height="1" fill="#000"/>
<rect x="783" y="305" width="4" height="1" fill="#000"/>
<rect x="783" y="295" width="4" height="1" fill="#000"/>
<rect x="779" y="285" width="8" height="1" fill="#000"/>
<text x="775.5" y="289.5" font-size="12" text-anchor="end" fill="#000" font-weight="normal" >100</text>
<rect x="783" y="275" width="4" height="1" fill="#000"/>
<rect x="783" y="264" width="4" height="1" fill="#000"/>
<rect x="783" y="254" width="4" height="1" fill="#000"/>
<rect x="783" y="244" width="4" height="1" fill="#000"/>
<rect x="779" y="234" width="8" height="1" fill="#000"/>
<text x="775.5" y="238.5" font-size="12" text-anchor="end" fill="#000" font-weight="normal" >150</text>
<rect x="783" y="224" width="4" height="1" fill="#000"/>
<rect x="783" y="214" width="4" height="1" fill="#000"/>
<rect x="783" y="203" width="4" height="1" fill="#000"/>
<rect x="783" y="193" width="4" height="1" fill="#000"/>
<rect x="779" y="183" width="8" height="1" fill="#000"/>
<text x="775.5" y="187.5" font-size="12" text-anchor="end" fill="#000" font-weight="normal" >200</text>
<rect x="783" y="173" width="4" height="1" fill="#000"/>
<rect x="783" y="163" width="4" height="1" fill="#000"/>
<rect x="783" y="152" width="4" height="1" fill="#000"/>
<rect x="783" y="142" width="4" height="1" fill="#000"/>
<rect x="779" y="132" width="8" height="1" fill="#000"/>
<text x="775.5" y="136.5" font-size="12" text-anchor="end" fill="#000" font-weight="normal" >250</text>
<rect x="783" y="122" width="4" height="1" fill="#000"/>
<rect x="783" y="112" width="4" height="1" fill="#000"/>
<rect x="790" y="107" width="246" height="288" fill="#fff"/>
<rect x="792" y="109" width="242" height="284" fill="#000"/>
<g clip-path="url(#c3)">
<line x1="792" x2="1034" y1="387.5" y2="387.5" stroke="#ffffff" stroke-dasharray="3 3"/>
<line x1="792" x2="1034" y1="376.5" y2="376.5" stroke="#a8a8a8" stroke-dasharray="3 3"/>
<line x1="792" x2="1034" y1="366.5" y2="366.5" stroke="#a8a8a8" stroke-dasharray="3 3"/>
<line x1="792" x2="1034" y1="356.5" y2="356.5" stroke="#a8a8a8" stroke-dasharray="3 3"/>
<line x1="792" x2="1034" y1="346.5" y2="346.5" stroke="#a8a8a8" stroke-dasharray="3 3"/>
<line x1="792" x2="1034" y1="336.5" y2="336.5" stroke="#ffffff" stroke-dasharray="3 3"/>
<line x1="792" x2="1034" y1="326.5" y2="326.5" stroke="#a8a8a8" stroke-dasharray="3 3"/>
<line x1="792" x2="1034" y1="315.5" y2="315.5" stroke="#a8a8a8" stroke-dasharray="3 3"/>
<line x1="792" x2="1034" y1="305.5" y2="305.5" stroke="#a8a8a8" stroke-dasharray="3 3"/>
<line x1="792" x2="1034" y1="295.5" y2="295.5" stroke="#a8a8a8" stroke-dasharray="3 3"/>
<line x1="792" x2="1034" y1="285.5" y2="285.5" stroke="#ffffff" stroke-dasharray="3 3"/>
<line x1="792" x2="1034" y1="275.5" y2="275.5" stroke="#a8a8a8" stroke-dasharray="3 3"/>
<line x1="792" x2="1034" y1="264.5" y2="264.5" stroke="#a8a8a8" stroke-dasharray="3 3"/>
<line x1="792" x2="1034" y1="254.5" y2="254.5" stroke="#a8a8a8" stroke-dasharray="3 3"/>
<line x1="792" x2="1034" y1="244.5" y2="244.5" stroke="#a8a8a8" stroke-dasharray="3 3"/>
<line x1="792" x2="1034" y1="234.5" y2="234.5" stroke="#ffffff" stroke-dasharray="3 3"/>
<line x1="792" x2="1034" y1="224.5" y2="224.5" stroke="#a8a8a8" stroke-dasharray="3 3"/>
<line x1="792" x2="1034" y1="214.5" y2="214.5" stroke="#a8a8a8" stroke-dasharray="3 3"/>
<line x1="792" x2="1034" y1="203.5" y2="203.5" stroke="#a8a8a8" stroke-dasharray="3 3"/>
<line x1="792" x2="1034" y1="193.5" y2="193.5" stroke="#a8a8a8" stroke-dasharray="3 3"/>
<line x1="792" x2="1034" y1="183.5" y2="183.5" stroke="#ffffff" stroke-dasharray="3 3"/>
<line x1="792" x2="1034" y1="173.5" y2="173.5" stroke="#a8a8a8" stroke-dasharray="3 3"/>
<line x1="792" x2="1034" y1="163.5" y2="163.5" stroke="#a8a8a8" stroke-dasharray="3 3"/>
<line x1="792" x2="1034" y1="152.5" y2="152.5" stroke="#a8a8a8" stroke-dasharray="3 3"/>
<line x1="792" x2="1034" y1="142.5" y2="142.5" stroke="#a8a8a8" stroke-dasharray="3 3"/>
<line x1="792" x2="1034" y1="132.5" y2="132.5" stroke="#ffffff" stroke-dasharray="3 3"/>
<line x1="792" x2="1034" y1="122.5" y2="122.5" stroke="#a8a8a8" stroke-dasharray="3 3"/>
<line x1="792" x2="1034" y1="112.5" y2="112.5" stroke="#a8a8a8" stroke-dasharray="3 3"/>
<line y1="109" y2="393" x1="796.5" x2="796.5" stroke="#ffffff" stroke-dasharray="3 3"/>
<line y1="109" y2="393" x1="803.5" x2="803.5" stroke="#a8a8a8" stroke-dasharray="3 3"/>
<line y1="109" y2="393" x1="811.5" x2="811.5" stroke="#a8a8a8" stroke-dasharray="3 3"/>
<line y1="109" y2="393" x1="818.5" x2="818.5" stroke="#a8a8a8" stroke-dasharray="3 3"/>
<line y1="109" y2="393" x1="826.5" x2="826.5" stroke="#a8a8a8" stroke-dasharray="3 3"/>
<line y1="109" y2="393" x1="833.5" x2="833.5" stroke="#ffffff" stroke-dasharray="3 3"/>
<line y1="109" y2="393" x1="841.5" x2="841.5" stroke="#a8a8a8" stroke-dasharray="3 3"/>
<line y1="109" y2="393" x1="848.5" x2="848.5" stroke="#a8a8a8" stroke-dasharray="3 3"/>
<line y1="109" y2="393" x1="856.5" x2="856.5" stroke="#a8a8a8" stroke-dasharray="3 3"/>
<line y1="109" y2="393" x1="863.5" x2="863.5" stroke="#a8a8a8" stroke-dasharray="3 3"/>
<line y1="109" y2="393" x1="870.5" x2="870.5" stroke="#ffffff" stroke-dasharray="3 3"/>
<line y1="109" y2="393" x1="878.5" x2="878.5" stroke="#a8a8a8" stroke-dasharray="3 3"/>
<line y1="109" y2="393" x1="885.5" x2="885.5" stroke="#a8a8a8" stroke-dasharray="3 3"/>
<line y1="109" y2="393" x1="893.5" x2="893.5" stroke="#a8a8a8" stroke-dasharray="3 3"/>
<line y1="109" y2="393" x1="900.5" x2="900.5" stroke="#a8a8a8" stroke-dasharray="3 3"/>
<line y1="109" y2="393" x1="908.5" x2="908.5" stroke="#ffffff" stroke-dasharray="3 3"/>
<line y1="109" y2="393" x1="915.5" x2="915.5" stroke="#a8a8a8" stroke-dasharray="3 3"/>
<line y1="109" y2="393" x1="923.5" x2="923.5" stroke="#a8a8a8" stroke-dasharray="3 3"/>
<line y1="109" y2="393" x1="930.5" x2="930.5" stroke="#a8a8a8" stroke-dasharray="3 3"/>
<line y1="109" y2="393" x1="938.5" x2="938.5" stroke="#a8a8a8" stroke-dasharray="3 3"/>
<line y1="109" y2="393" x1="945.5" x2="945.5" stroke="#ffffff" stroke-dasharray="3 3"/>
<line y1="109" y2="393" x1="953.5" x2="953.5" stroke="#a8a8a8" stroke-dasharray="3 3"/>
<line y1="109" y2="393" x1="960.5" x2="960.5" stroke="#a8a8a8" stroke-dasharray="3 3"/>
<line y1="109" y2="393" x1="967.5" x2="967.5" stroke="#a8a8a8" stroke-dasharray="3 3"/>
<line y1="109" y2="393" x1="975.5" x2="975.5" stroke="#a8a8a8" stroke-dasharray="3 3"/>
<line y1="109" y2="393" x1="982.5" x2="982.5" stroke="#ffffff" stroke-dasharray="3 3"/>
<line y1="109" y2="393" x1="990.5" x2="990.5" stroke="#a8a8a8" stroke-dasharray="3 3"/>
<line y1="109" y2="393" x1="997.5" x2="997.5" stroke="#a8a8a8" stroke-dasharray="3 3"/>
<line y1="109" y2="393" x1="1005.5" x2="1005.5" stroke="#a8a8a8" stroke-dasharray="3 3"/>
<line y1="109" y2="393" x1="1012.5" x2="1012.5" stroke="#a8a8a8" stroke-dasharray="3 3"/>
<line y1="109" y2="393" x1="1020.5" x2="1020.5" stroke="#ffffff" stroke-dasharray="3 3"/>
<line y1="109" y2="393" x1="1027.5" x2="1027.5" stroke="#a8a8a8" stroke-dasharray="3 3"/>
<path fill="#ff0000" d="M801 137h4V387h-4zM809 319h4V387h-4zM816 352h4V387h-4zM824 363h4V387h-4zM831 366h4V387h-4zM838 371h4V387h-4zM846 384h4V387h-4zM853 382h4V387h-4zM861 386h4V387h-4zM868 383h4V387h-4zM876 384h4V387h-4zM883 385h4V387h-4zM891 384h4V387h-4zM898 385h4V387h-4zM913 385h4V387h-4zM928 385h4V387h-4zM936 386h4V387h-4zM965 386h4V387h-4zM988 386h4V387h-4zM1018 386h4V387h-4z"/>
</g>
<rect x="796" y="397" width="232" height="1" fill="#000"/>
<rect x="796" y="397" width="1" height="9" fill="#000"/>
<text x="796.5" y="418" font-size="12" text-anchor="middle" fill="#000" font-weight="normal" >0</text>
<rect x="803" y="397" width="1" height="5" fill="#000"/>
<rect x="811" y="397" width="1" height="5" fill="#000"/>
<rect x="818" y="397" width="1" height="5" fill="#000"/>
<rect x="826" y="397" width="1" height="5" fill="#000"/>
<rect x="833" y="397" width="1" height="9" fill="#000"/>
<text x="833.5" y="418" font-size="12" text-anchor="middle" fill="#000" font-weight="normal" >5</text>
<rect x="841" y="397" width="1" height="5" fill="#000"/>
<rect x="848" y="397" width="1" height="5" fill="#000"/>
<rect x="856" y="397" width="1" height="5" fill="#000"/>
<rect x="863" y="397" width="1" height="5" fill="#000"/>
<rect x="870" y="397" width="1" height="9" fill="#000"/>
<text x="870.5" y="418" font-size="12" text-anchor="middle" fill="#000" font-weight="normal" >10</text>
<rect x="878" y="397" width="1" height="5" fill="#000"/>
<rect x="885" y="397" width="1" height="5" fill="#000"/>
<rect x="893" y="397" width="1" height="5" fill="#000"/>
<rect x="900" y="397" width="1" height="5" fill="#000"/>
<rect x="908" y="397" width="1" height="9" fill="#000"/>
<text x="908.5" y="418" font-size="12" text-anchor="middle" fill="#000" font-weight="normal" >15</text>
<rect x="915" y="397" width="1" height="5" fill="#000"/>
<rect x="923" y="397" width="1" height="5" fill="#000"/>
<rect x="930" y="397" width="1" height="5" fill="#000"/>
<rect x="938" y="397" width="1" height="5" fill="#000"/>
<rect x="945" y="397" width="1" height="9" fill="#000"/>
<text x="945.5" y="418" font-size="12" text-anchor="middle" fill="#000" font-weight="normal" >20</text>
<rect x="953" y="397" width="1" height="5" fill="#000"/>
<rect x="960" y="397" width="1" height="5" fill="#000"/>
<rect x="967" y="397" width="1" height="5" fill="#000"/>
<rect x="975" y="397" width="1" height="5" fill="#000"/>
<rect x="982" y="397" width="1" height="9" fill="#000"/>
<text x="982.5" y="418" font-size="12" text-anchor="middle" fill="#000" font-weight="normal" >25</text>
<rect x="990" y="397" width="1" height="5" fill="#000"/>
<rect x="997" y="397" width="1" height="5" fill="#000"/>
<rect x="1005" y="397" width="1" height="5" fill="#000"/>
<rect x="1012" y="397" width="1" height="5" fill="#000"/>
<rect x="1020" y="397" width="1" height="9" fill="#000"/>
<text x="1020.5" y="418" font-size="12" text-anchor="middle" fill="#000" font-weight="normal" >30</text>
<rect x="1027" y="397" width="1" height="5" fill="#000"/>
<text x="914.8" y="435.6" font-size="14" text-anchor="middle" fill="#000" font-weight="bold" >Red cluster size</text>
</svg>

<!-- horizontal splitter -->
<div class="a" style="left:3px;top:449px;width:1043px;height:1px;background:#027474;"></div>
<div class="a" style="left:3px;top:450px;width:1043px;height:1px;background:#e2e2e2;"></div>
<div class="a" style="left:3px;top:451px;width:1043px;height:2px;background:#027474;"></div>
<div class="a" style="left:3px;top:453px;width:1043px;height:1px;background:#8c8c8c;"></div>
<div class="a" style="left:3px;top:454px;width:1043px;height:1px;background:#000;"></div>

<!-- text area -->
<div class="a" style="left:3px;top:455px;width:1043px;height:330px;background:#fff;box-sizing:border-box;border-top:1px solid #8c8c8c;border-left:1px solid #8c8c8c;border-right:1px solid #fff;border-bottom:1px solid #fff;"></div>
<div class="a" style="left:4px;top:456px;width:1041px;height:328px;background:#fff;box-sizing:border-box;border-top:1px solid #000;border-left:1px solid #000;border-right:1px solid #dedede;border-bottom:1px solid #dedede;"></div>
<pre id="txt">Alpha is 0.01

Pairwise P value map color definitions:
  P is the pairwise P value as determined by a CorMap analysis
  Green corresponds to         P &gt;= 0.05
  Yellow corresponds to 0.05 &gt; P &gt;= 0.01
  Red corresponds to    0.01 &gt; P
Axes ticks correspond to Ref. as listed below

P values:
  69.2% green (42.1%) + yellow (27.2%) pairs
  30.8% red pairs

Average one-to-all P value 0.07287 ±0.02699 (37.0%) % red 30.8% ±11.9 (38.5%)
Red cluster count 438, average size 2.69 ±3.47 (129.0%), average size as pct of total area 0.1% ±0.1
Red cluster maximum size 30 (0.8%) has 1 occurrence and begins at [13,78].

 Ref. : Time/Frame    Avg. P value    Min. P Value      % Red
    1 : 1               0.09271         0.0004882        24.1%</pre>
<!-- scrollbar -->
<svg class="a" style="left:1028px;top:457px;shape-rendering:crispEdges" width="16" height="326">
<defs><pattern id="chk" width="2" height="2" patternUnits="userSpaceOnUse"><rect width="2" height="2" fill="#ffffff"/><rect width="1" height="1" fill="#c6c6c6"/><rect x="1" y="1" width="1" height="1" fill="#c6c6c6"/></pattern></defs>
<rect x="0" y="0" width="16" height="326" fill="url(#chk)"/>
<rect x="0" y="0" width="16" height="16" fill="#000"/>
<rect x="0" y="0" width="15" height="15" fill="#fff"/>
<rect x="1" y="1" width="14" height="14" fill="#868686"/>
<rect x="1" y="1" width="13" height="13" fill="#c6c6c6"/>
<path d="M4 10h7l-3.5-4z" fill="#000" shape-rendering="auto"/>
<rect x="0" y="16" width="16" height="9" fill="#000"/>
<rect x="0" y="16" width="15" height="8" fill="#fff"/>
<rect x="1" y="17" width="14" height="7" fill="#868686"/>
<rect x="1" y="17" width="13" height="6" fill="#c6c6c6"/>
<rect x="0" y="310" width="16" height="16" fill="#000"/>
<rect x="0" y="310" width="15" height="15" fill="#fff"/>
<rect x="1" y="311" width="14" height="14" fill="#868686"/>
<rect x="1" y="311" width="13" height="13" fill="#c6c6c6"/>
<path d="M4 316h7l-3.5 4z" fill="#000" shape-rendering="auto"/>
</svg>

<!-- checkbox row -->
<div class="a" style="left:3px;top:785px;width:1043px;height:18px;background:#c6c6c6;"></div>
<div class="a" style="left:3px;top:788px;width:13px;height:13px;background:#fff;box-sizing:border-box;border-top:1px solid #808080;border-left:1px solid #808080;border-right:1px solid #dedede;border-bottom:1px solid #dedede;box-shadow:inset 1px 1px 0 #000;"></div>
<div class="a" style="left:18px;top:785px;width:200px;height:18px;box-sizing:border-box;border:1px dotted #000;"></div>
<div class="a" style="left:21px;top:785px;height:18px;line-height:18px;font-size:12.5px;color:#000;white-space:pre;">Holm-Bonferroni adjusted P values</div>
<div class="a" style="left:3px;top:803px;width:1043px;height:1px;background:#dedede;"></div>
<div class="a" style="left:3px;top:804px;width:1043px;height:4px;background:#027474;"></div>

<!-- buttons -->
<div class="btn" style="left:3px;width:261px;">Help</div>
<div class="btn" style="left:264px;width:261px;">Save</div>
<div class="btn" style="left:525px;width:260px;">Load</div>
<div class="btn" style="left:785px;width:261px;">Close</div>
</body></html>
